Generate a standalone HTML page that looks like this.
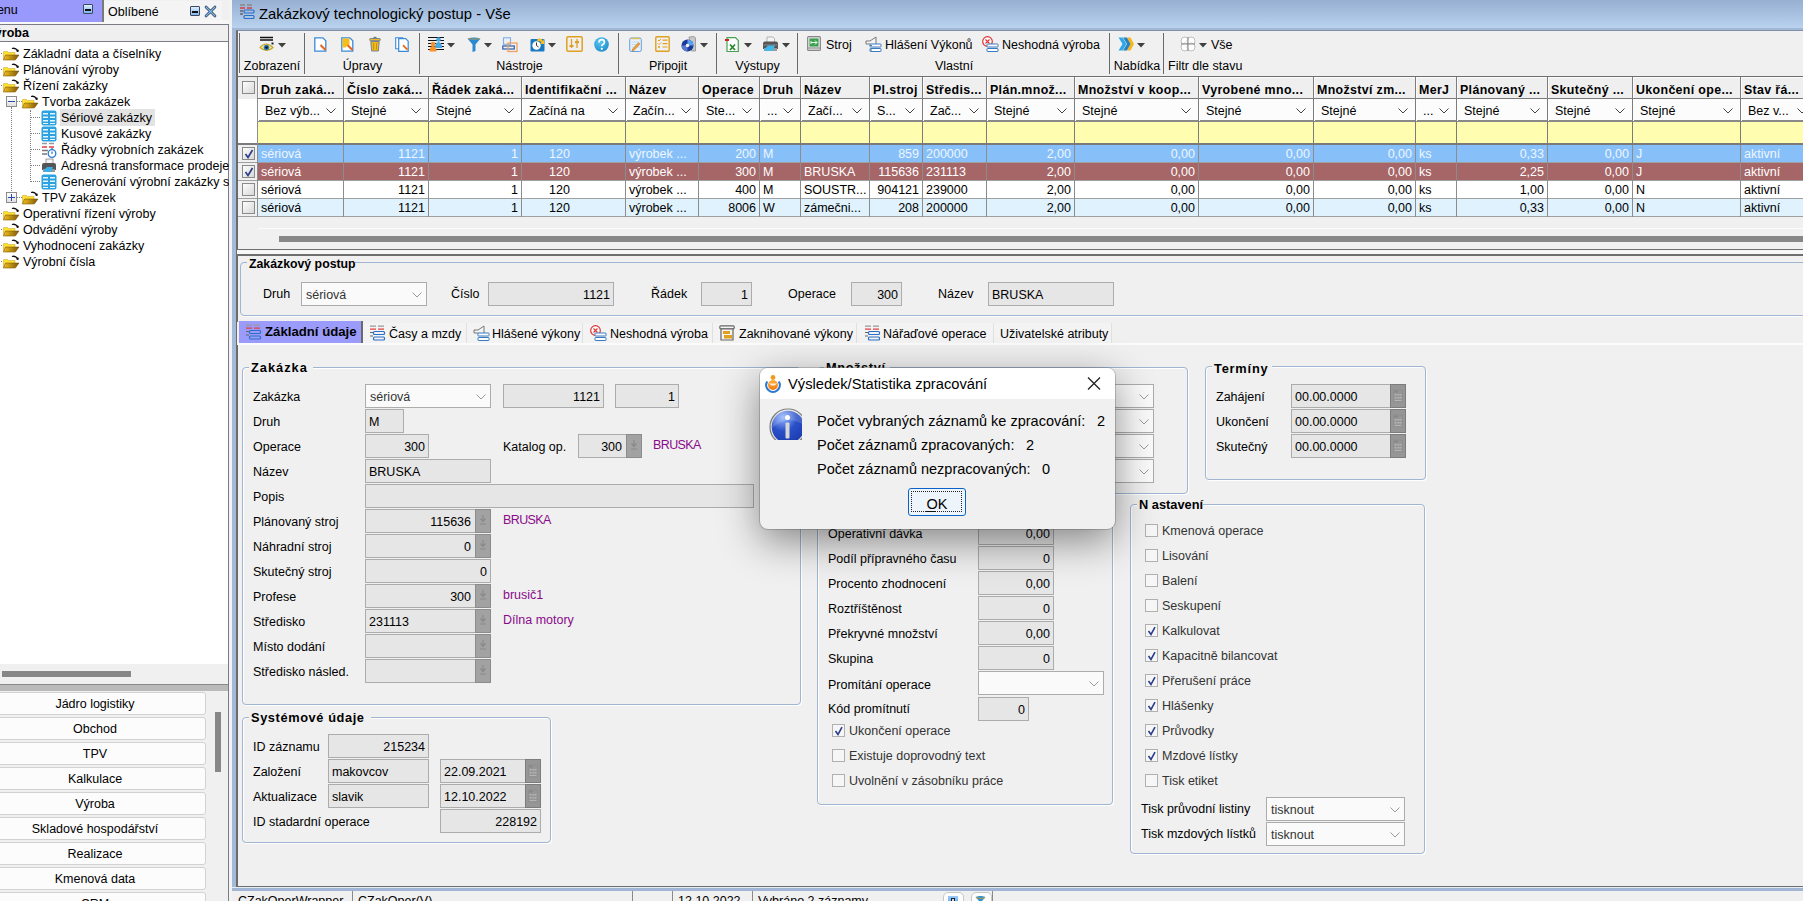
<!DOCTYPE html><html><head><meta charset="utf-8"><style>
*{margin:0;padding:0;box-sizing:border-box}
html,body{width:1803px;height:901px;overflow:hidden}
body{position:relative;background:#f0f0f0;font-family:"Liberation Sans",sans-serif;font-size:12.5px;color:#000}
.a{position:absolute}
.t{position:absolute;white-space:nowrap;line-height:normal}
svg{position:absolute;overflow:visible}
</style></head><body><div class="a" style="left:0px;top:0px;width:229px;height:901px;background:#f0f0f0"></div><div class="a" style="left:0px;top:0px;width:103px;height:22px;background:#9999fc"></div><div class="t" style="left:-13.5px;top:2.69px;font-size:12.5px;">Menu</div><div class="a" style="left:83px;top:4px;width:10px;height:10px;border:1px solid #3c4a60;border-radius:1px;background:linear-gradient(#dfefff,#7fb4ec)"><div class="a" style="left:1px;top:4px;width:6px;height:2px;background:#111"></div></div><div class="a" style="left:102px;top:0px;width:2px;height:22px;background:#7a7a7a"></div><div class="a" style="left:104px;top:1px;width:118px;height:19px;background:#f4f4f4"></div><div class="t" style="left:108px;top:4.69px;font-size:12.5px;">Oblíbené</div><div class="a" style="left:190px;top:6px;width:10px;height:10px;border:1px solid #3c4a60;border-radius:1px;background:linear-gradient(#dfefff,#7fb4ec)"><div class="a" style="left:1px;top:4px;width:6px;height:2px;background:#111"></div></div><svg class="a" style="left:205px;top:6px" width="11" height="11" viewBox="0 0 11 11"><path d="M1 1 L10 10 M10 1 L1 10" stroke="#2a3a50" stroke-width="2.6" stroke-linecap="round"/><path d="M1 1 L10 10 M10 1 L1 10" stroke="#7fbaf0" stroke-width="1.2" stroke-linecap="round"/></svg><div class="a" style="left:104px;top:20px;width:125px;height:4px;background:#f7f7f7"></div><div class="a" style="left:0px;top:22px;width:104px;height:2px;background:#f7f7f7"></div><div class="a" style="left:0px;top:24px;width:229px;height:18px;background:#efefef;border-top:1px solid #7c7c84;border-bottom:1px solid #7c7c84;border-right:1px solid #7c7c84"></div><div class="t" style="left:-13.5px;top:25.69px;font-size:12.5px;font-weight:bold;">Výroba</div><div class="a" style="left:0px;top:42px;width:228px;height:622px;background:#fff"></div><div class="a" style="left:228px;top:24px;width:1px;height:877px;background:#7c7c84"></div><div class="a" style="left:11px;top:107px;width:1px;height:90px;border-left:1px dotted #808080"></div><div class="a" style="left:30px;top:110px;width:1px;height:72px;border-left:1px dotted #808080"></div><div class="a" style="left:1px;top:53px;width:1px;height:1px;background:#808080"></div><svg class="a" style="left:3px;top:47px" width="17" height="14" viewBox="0 0 17 14">
<defs><linearGradient id="fg0" x1="0" y1="0" x2="1" y2="0"><stop offset="0" stop-color="#f0c020"/><stop offset="1" stop-color="#80560a"/></linearGradient></defs>
<path d="M0.5 4.5 h4 l1 1 h6.5 v7.5 h-11.5z" fill="#ffe030" stroke="#c8a020" stroke-width="0.5"/>
<path d="M2.5 8 h13.5 l-3.5 4.8 h-12z" fill="url(#fg0)" stroke="#6a4a08" stroke-width="0.5"/>
<path d="M9 1.5 q3.5 -1 5.5 2" fill="none" stroke="#111" stroke-width="1.3"/><circle cx="14.6" cy="3.8" r="1.2" fill="#111"/>
</svg><div class="t" style="left:23px;top:46.69px;font-size:12.5px;">Základní data a číselníky</div><div class="a" style="left:1px;top:69px;width:1px;height:1px;background:#808080"></div><svg class="a" style="left:3px;top:63px" width="17" height="14" viewBox="0 0 17 14">
<defs><linearGradient id="fg1" x1="0" y1="0" x2="1" y2="0"><stop offset="0" stop-color="#f0c020"/><stop offset="1" stop-color="#80560a"/></linearGradient></defs>
<path d="M0.5 4.5 h4 l1 1 h6.5 v7.5 h-11.5z" fill="#ffe030" stroke="#c8a020" stroke-width="0.5"/>
<path d="M2.5 8 h13.5 l-3.5 4.8 h-12z" fill="url(#fg1)" stroke="#6a4a08" stroke-width="0.5"/>
<path d="M9 1.5 q3.5 -1 5.5 2" fill="none" stroke="#111" stroke-width="1.3"/><circle cx="14.6" cy="3.8" r="1.2" fill="#111"/>
</svg><div class="t" style="left:23px;top:62.69px;font-size:12.5px;">Plánování výroby</div><div class="a" style="left:1px;top:85px;width:1px;height:1px;background:#808080"></div><svg class="a" style="left:3px;top:79px" width="17" height="14" viewBox="0 0 17 14">
<defs><linearGradient id="fg2" x1="0" y1="0" x2="1" y2="0"><stop offset="0" stop-color="#f0c020"/><stop offset="1" stop-color="#80560a"/></linearGradient></defs>
<path d="M0.5 4.5 h4 l1 1 h6.5 v7.5 h-11.5z" fill="#ffe030" stroke="#c8a020" stroke-width="0.5"/>
<path d="M2.5 8 h13.5 l-3.5 4.8 h-12z" fill="url(#fg2)" stroke="#6a4a08" stroke-width="0.5"/>
<path d="M9 1.5 q3.5 -1 5.5 2" fill="none" stroke="#111" stroke-width="1.3"/><circle cx="14.6" cy="3.8" r="1.2" fill="#111"/>
</svg><div class="t" style="left:23px;top:78.69px;font-size:12.5px;">Řízení zakázky</div><div class="a" style="left:6px;top:96px;width:11px;height:11px;background:linear-gradient(#fff,#e0e0e0);border:1px solid #8c8c8c"></div><div class="a" style="left:8px;top:101px;width:7px;height:1px;background:#2a4ab0"></div><div class="a" style="left:17px;top:101px;width:5px;height:1px;border-top:1px dotted #808080"></div><svg class="a" style="left:22px;top:95px" width="17" height="14" viewBox="0 0 17 14">
<defs><linearGradient id="fg3" x1="0" y1="0" x2="1" y2="0"><stop offset="0" stop-color="#f0c020"/><stop offset="1" stop-color="#80560a"/></linearGradient></defs>
<path d="M0.5 4.5 h4 l1 1 h6.5 v7.5 h-11.5z" fill="#ffe030" stroke="#c8a020" stroke-width="0.5"/>
<path d="M2.5 8 h13.5 l-3.5 4.8 h-12z" fill="url(#fg3)" stroke="#6a4a08" stroke-width="0.5"/>
<path d="M9 1.5 q3.5 -1 5.5 2" fill="none" stroke="#111" stroke-width="1.3"/><circle cx="14.6" cy="3.8" r="1.2" fill="#111"/>
</svg><div class="t" style="left:42px;top:94.69px;font-size:12.5px;">Tvorba zakázek</div><div class="a" style="left:31px;top:117px;width:9px;height:1px;border-top:1px dotted #808080"></div><div class="a" style="left:60px;top:109px;width:95px;height:17px;background:#e3e3e3"></div><svg class="a" style="left:41px;top:110px" width="16" height="16" viewBox="0 0 16 16">
<rect x="0.5" y="0.5" width="15" height="15" rx="2" fill="#2aa3e0"/>
<g fill="#e8f6ff"><rect x="2" y="3" width="5" height="1.5"/><rect x="9" y="3" width="5" height="1.5"/><rect x="2" y="6.5" width="5" height="1.5"/><rect x="9" y="6.5" width="5" height="1.5"/><rect x="2" y="10" width="5" height="1.5"/><rect x="9" y="10" width="5" height="1.5"/><rect x="2" y="13" width="5" height="1"/><rect x="9" y="13" width="5" height="1"/></g>
</svg><div class="t" style="left:61px;top:110.69px;font-size:12.5px;">Sériové zakázky</div><div class="a" style="left:31px;top:133px;width:9px;height:1px;border-top:1px dotted #808080"></div><svg class="a" style="left:41px;top:126px" width="16" height="16" viewBox="0 0 16 16">
<rect x="0.5" y="0.5" width="15" height="15" rx="2" fill="#2aa3e0"/>
<g fill="#e8f6ff"><rect x="2" y="3" width="5" height="1.5"/><rect x="9" y="3" width="5" height="1.5"/><rect x="2" y="6.5" width="5" height="1.5"/><rect x="9" y="6.5" width="5" height="1.5"/><rect x="2" y="10" width="5" height="1.5"/><rect x="9" y="10" width="5" height="1.5"/><rect x="2" y="13" width="5" height="1"/><rect x="9" y="13" width="5" height="1"/></g>
</svg><div class="t" style="left:61px;top:126.69px;font-size:12.5px;">Kusové zakázky</div><div class="a" style="left:31px;top:149px;width:9px;height:1px;border-top:1px dotted #808080"></div><svg class="a" style="left:41px;top:142px" width="16" height="16" viewBox="0 0 16 16"><g stroke-width="1.5"><path d="M1 1.5h5M8 1.5h5" stroke="#999"/><path d="M1 5h5M8 5h5" stroke="#e04040"/><path d="M1 8.5h6M1 12h5" stroke="#777"/></g><circle cx="11" cy="11.5" r="3.8" fill="#fff" stroke="#2a7ad0" stroke-width="1.3"/><path d="M11 9.5v2.5" stroke="#2a7ad0" stroke-width="1.2"/><path d="M10 6.8h2" stroke="#2a7ad0" stroke-width="1"/></svg><div class="t" style="left:61px;top:142.69px;font-size:12.5px;">Řádky výrobních zakázek</div><div class="a" style="left:31px;top:165px;width:9px;height:1px;border-top:1px dotted #808080"></div><svg class="a" style="left:41px;top:158px" width="16" height="16" viewBox="0 0 16 16"><rect x="5" y="1" width="7" height="5" fill="#f4f4f4" stroke="#777" stroke-width="0.7"/><path d="M1 7 q0-2 2-2 h10 q2 0 2 2 v5 h-14z" fill="#555"/><path d="M2 11 h12 v3 h-12z" fill="#999"/><path d="M3 12 l3 -3 h6 l-2 5 h-7z" fill="#3ab0e8"/></svg><div class="t" style="left:61px;top:158.69px;font-size:12.5px;">Adresná transformace prodejek</div><div class="a" style="left:31px;top:181px;width:9px;height:1px;border-top:1px dotted #808080"></div><svg class="a" style="left:41px;top:174px" width="16" height="16" viewBox="0 0 16 16">
<rect x="0.5" y="0.5" width="15" height="15" rx="2" fill="#2aa3e0"/>
<g fill="#e8f6ff"><rect x="2" y="3" width="5" height="1.5"/><rect x="9" y="3" width="5" height="1.5"/><rect x="2" y="6.5" width="5" height="1.5"/><rect x="9" y="6.5" width="5" height="1.5"/><rect x="2" y="10" width="5" height="1.5"/><rect x="9" y="10" width="5" height="1.5"/><rect x="2" y="13" width="5" height="1"/><rect x="9" y="13" width="5" height="1"/></g>
</svg><div class="t" style="left:61px;top:174.69px;font-size:12.5px;">Generování výrobní zakázky s</div><div class="a" style="left:6px;top:192px;width:11px;height:11px;background:linear-gradient(#fff,#e0e0e0);border:1px solid #8c8c8c"></div><div class="a" style="left:8px;top:197px;width:7px;height:1px;background:#2a4ab0"></div><div class="a" style="left:11px;top:194px;width:1px;height:7px;background:#2a4ab0"></div><div class="a" style="left:17px;top:197px;width:5px;height:1px;border-top:1px dotted #808080"></div><svg class="a" style="left:22px;top:191px" width="17" height="14" viewBox="0 0 17 14">
<defs><linearGradient id="fg9" x1="0" y1="0" x2="1" y2="0"><stop offset="0" stop-color="#f0c020"/><stop offset="1" stop-color="#80560a"/></linearGradient></defs>
<path d="M0.5 4.5 h4 l1 1 h6.5 v7.5 h-11.5z" fill="#ffe030" stroke="#c8a020" stroke-width="0.5"/>
<path d="M2.5 8 h13.5 l-3.5 4.8 h-12z" fill="url(#fg9)" stroke="#6a4a08" stroke-width="0.5"/>
<path d="M9 1.5 q3.5 -1 5.5 2" fill="none" stroke="#111" stroke-width="1.3"/><circle cx="14.6" cy="3.8" r="1.2" fill="#111"/>
</svg><div class="t" style="left:42px;top:190.69px;font-size:12.5px;">TPV zakázek</div><div class="a" style="left:1px;top:213px;width:1px;height:1px;background:#808080"></div><svg class="a" style="left:3px;top:207px" width="17" height="14" viewBox="0 0 17 14">
<defs><linearGradient id="fg10" x1="0" y1="0" x2="1" y2="0"><stop offset="0" stop-color="#f0c020"/><stop offset="1" stop-color="#80560a"/></linearGradient></defs>
<path d="M0.5 4.5 h4 l1 1 h6.5 v7.5 h-11.5z" fill="#ffe030" stroke="#c8a020" stroke-width="0.5"/>
<path d="M2.5 8 h13.5 l-3.5 4.8 h-12z" fill="url(#fg10)" stroke="#6a4a08" stroke-width="0.5"/>
<path d="M9 1.5 q3.5 -1 5.5 2" fill="none" stroke="#111" stroke-width="1.3"/><circle cx="14.6" cy="3.8" r="1.2" fill="#111"/>
</svg><div class="t" style="left:23px;top:206.69px;font-size:12.5px;">Operativní řízení výroby</div><div class="a" style="left:1px;top:229px;width:1px;height:1px;background:#808080"></div><svg class="a" style="left:3px;top:223px" width="17" height="14" viewBox="0 0 17 14">
<defs><linearGradient id="fg11" x1="0" y1="0" x2="1" y2="0"><stop offset="0" stop-color="#f0c020"/><stop offset="1" stop-color="#80560a"/></linearGradient></defs>
<path d="M0.5 4.5 h4 l1 1 h6.5 v7.5 h-11.5z" fill="#ffe030" stroke="#c8a020" stroke-width="0.5"/>
<path d="M2.5 8 h13.5 l-3.5 4.8 h-12z" fill="url(#fg11)" stroke="#6a4a08" stroke-width="0.5"/>
<path d="M9 1.5 q3.5 -1 5.5 2" fill="none" stroke="#111" stroke-width="1.3"/><circle cx="14.6" cy="3.8" r="1.2" fill="#111"/>
</svg><div class="t" style="left:23px;top:222.69px;font-size:12.5px;">Odvádění výroby</div><div class="a" style="left:1px;top:245px;width:1px;height:1px;background:#808080"></div><svg class="a" style="left:3px;top:239px" width="17" height="14" viewBox="0 0 17 14">
<defs><linearGradient id="fg12" x1="0" y1="0" x2="1" y2="0"><stop offset="0" stop-color="#f0c020"/><stop offset="1" stop-color="#80560a"/></linearGradient></defs>
<path d="M0.5 4.5 h4 l1 1 h6.5 v7.5 h-11.5z" fill="#ffe030" stroke="#c8a020" stroke-width="0.5"/>
<path d="M2.5 8 h13.5 l-3.5 4.8 h-12z" fill="url(#fg12)" stroke="#6a4a08" stroke-width="0.5"/>
<path d="M9 1.5 q3.5 -1 5.5 2" fill="none" stroke="#111" stroke-width="1.3"/><circle cx="14.6" cy="3.8" r="1.2" fill="#111"/>
</svg><div class="t" style="left:23px;top:238.69px;font-size:12.5px;">Vyhodnocení zakázky</div><div class="a" style="left:1px;top:261px;width:1px;height:1px;background:#808080"></div><svg class="a" style="left:3px;top:255px" width="17" height="14" viewBox="0 0 17 14">
<defs><linearGradient id="fg13" x1="0" y1="0" x2="1" y2="0"><stop offset="0" stop-color="#f0c020"/><stop offset="1" stop-color="#80560a"/></linearGradient></defs>
<path d="M0.5 4.5 h4 l1 1 h6.5 v7.5 h-11.5z" fill="#ffe030" stroke="#c8a020" stroke-width="0.5"/>
<path d="M2.5 8 h13.5 l-3.5 4.8 h-12z" fill="url(#fg13)" stroke="#6a4a08" stroke-width="0.5"/>
<path d="M9 1.5 q3.5 -1 5.5 2" fill="none" stroke="#111" stroke-width="1.3"/><circle cx="14.6" cy="3.8" r="1.2" fill="#111"/>
</svg><div class="t" style="left:23px;top:254.69px;font-size:12.5px;">Výrobní čísla</div><div class="a" style="left:0px;top:664px;width:228px;height:20px;background:#f0f0f0"></div><div class="a" style="left:2px;top:671px;width:129px;height:6px;background:#878787"></div><div class="a" style="left:0px;top:684px;width:228px;height:7px;background:#bababa;border-top:1px solid #8a8a8a"></div><div class="a" style="left:0px;top:691px;width:228px;height:210px;background:#f0f0f0"></div><div class="a" style="left:-4px;top:692px;width:210px;height:23px;background:#fcfcfc;border:1px solid #d2d2d2;border-radius:3px"></div><div class="t" style="left:0px;top:696.69px;font-size:12.5px;width:190px;text-align:center;">Jádro logistiky</div><div class="a" style="left:-4px;top:717px;width:210px;height:23px;background:#fcfcfc;border:1px solid #d2d2d2;border-radius:3px"></div><div class="t" style="left:0px;top:721.69px;font-size:12.5px;width:190px;text-align:center;">Obchod</div><div class="a" style="left:-4px;top:742px;width:210px;height:23px;background:#fcfcfc;border:1px solid #d2d2d2;border-radius:3px"></div><div class="t" style="left:0px;top:746.69px;font-size:12.5px;width:190px;text-align:center;">TPV</div><div class="a" style="left:-4px;top:767px;width:210px;height:23px;background:#fcfcfc;border:1px solid #d2d2d2;border-radius:3px"></div><div class="t" style="left:0px;top:771.69px;font-size:12.5px;width:190px;text-align:center;">Kalkulace</div><div class="a" style="left:-4px;top:792px;width:210px;height:23px;background:#fcfcfc;border:1px solid #d2d2d2;border-radius:3px"></div><div class="t" style="left:0px;top:796.69px;font-size:12.5px;width:190px;text-align:center;">Výroba</div><div class="a" style="left:-4px;top:817px;width:210px;height:23px;background:#fcfcfc;border:1px solid #d2d2d2;border-radius:3px"></div><div class="t" style="left:0px;top:821.69px;font-size:12.5px;width:190px;text-align:center;">Skladové hospodářství</div><div class="a" style="left:-4px;top:842px;width:210px;height:23px;background:#fcfcfc;border:1px solid #d2d2d2;border-radius:3px"></div><div class="t" style="left:0px;top:846.69px;font-size:12.5px;width:190px;text-align:center;">Realizace</div><div class="a" style="left:-4px;top:867px;width:210px;height:23px;background:#fcfcfc;border:1px solid #d2d2d2;border-radius:3px"></div><div class="t" style="left:0px;top:871.69px;font-size:12.5px;width:190px;text-align:center;">Kmenová data</div><div class="a" style="left:-4px;top:892px;width:210px;height:23px;background:#fcfcfc;border:1px solid #d2d2d2;border-radius:3px"></div><div class="t" style="left:0px;top:896.69px;font-size:12.5px;width:190px;text-align:center;">CRM</div><div class="a" style="left:215px;top:712px;width:6px;height:60px;background:#878787"></div><div class="a" style="left:229px;top:0px;width:3px;height:901px;background:#f3f3f3"></div><div class="a" style="left:232px;top:0px;width:1571px;height:901px;background:#a3bad8"></div><div class="a" style="left:232px;top:0px;width:1571px;height:28px;background:linear-gradient(#97afd2,#b9d2ee)"></div><div class="a" style="left:232px;top:28px;width:1571px;height:2px;background:#a2b8d6"></div><svg class="a" style="left:239px;top:4px" width="16" height="16" viewBox="0 0 16 16"><g stroke-width="1.3"><path d="M1 1h5M8 1h5" stroke="#888"/><path d="M1 4h5M8 4h5" stroke="#d84040"/><path d="M1 7h3M1 10h3" stroke="#666"/></g><g fill="none" stroke="#2a70c8" stroke-width="1.2"><rect x="5" y="6" width="10" height="3" rx="1"/><rect x="5" y="11.5" width="10" height="3" rx="1"/></g></svg><div class="t" style="left:259px;top:6.11px;font-size:14.8px;">Zakázkový technologický postup - Vše</div><div class="a" style="left:236px;top:30px;width:1567px;height:858px;background:#f0f0f0;border-left:2px solid #6b6b6b;border-top:1px solid #8092aa"></div><div class="a" style="left:239px;top:33px;width:1px;height:40px;background:#6b6b6b"></div><div class="a" style="left:304px;top:33px;width:1px;height:41px;background:#6a6a6a"></div><div class="a" style="left:419px;top:33px;width:1px;height:41px;background:#6a6a6a"></div><div class="a" style="left:618px;top:33px;width:1px;height:41px;background:#6a6a6a"></div><div class="a" style="left:716px;top:33px;width:1px;height:41px;background:#6a6a6a"></div><div class="a" style="left:797px;top:33px;width:1px;height:41px;background:#6a6a6a"></div><div class="a" style="left:1109px;top:33px;width:1px;height:41px;background:#6a6a6a"></div><div class="a" style="left:1163px;top:33px;width:1px;height:41px;background:#6a6a6a"></div><div class="t" style="left:240px;top:58.69px;font-size:12.5px;width:64px;text-align:center;">Zobrazení</div><div class="t" style="left:306px;top:58.69px;font-size:12.5px;width:113px;text-align:center;">Úpravy</div><div class="t" style="left:421px;top:58.69px;font-size:12.5px;width:197px;text-align:center;">Nástroje</div><div class="t" style="left:620px;top:58.69px;font-size:12.5px;width:96px;text-align:center;">Připojit</div><div class="t" style="left:718px;top:58.69px;font-size:12.5px;width:79px;text-align:center;">Výstupy</div><div class="t" style="left:799px;top:58.69px;font-size:12.5px;width:310px;text-align:center;">Vlastní</div><div class="t" style="left:1111px;top:58.69px;font-size:12.5px;width:52px;text-align:center;">Nabídka</div><div class="t" style="left:1168px;top:58.69px;font-size:12.5px;">Filtr dle stavu</div><svg class="a" style="left:259px;top:36px" width="16" height="17" viewBox="0 0 16 17"><path d="M1 1.5h13M1 4h13" stroke="#111" stroke-width="1.3"/><path d="M12.5 7.5h2" stroke="#222" stroke-width="2"/><path d="M1 11.5 q6 -7 13 0 q-6 6 -13 0z" fill="#f3e7a0" stroke="#c9a020" stroke-width="1.1"/><circle cx="7.5" cy="11.5" r="2.8" fill="#2a7fb0"/><circle cx="7.5" cy="11.5" r="1.3" fill="#111"/></svg><svg class="a" style="left:278px;top:43px" width="8" height="5" viewBox="0 0 8 5"><path d="M0 0h8l-4 4.5z" fill="#404040"/></svg><svg class="a" style="left:314px;top:37px" width="13" height="15" viewBox="0 0 13 15"><path d="M0.8 0.8h8l3 3v10.4h-11z" fill="#fff" stroke="#3a8ad8" stroke-width="1.3"/><path d="M6 9 l4.5 4.5 l1.5 -0.5 l-0.5 -1.5 l-4.5 -4.5z" fill="#e8661a"/></svg><svg class="a" style="left:341px;top:37px" width="13" height="15" viewBox="0 0 13 15"><path d="M0.8 0.8h8l3 3v10.4h-11z" fill="#fff" stroke="#3a8ad8" stroke-width="1.3"/><path d="M1.5 1.5h7v5l-4 4h-3z" fill="#f5bf1a"/><path d="M6 9 l4.5 4.5 l1.5 -0.5 l-0.5 -1.5 l-4.5 -4.5z" fill="#e8661a"/></svg><svg class="a" style="left:369px;top:36px" width="12" height="16" viewBox="0 0 12 16"><path d="M4.5 1.5h3" stroke="#6a7a90" stroke-width="1.4"/><rect x="0.7" y="2.5" width="10.6" height="2.2" rx="0.8" fill="#f0b820" stroke="#6a7a90" stroke-width="0.9"/><path d="M1.8 5.5h8.4l-0.8 9.5h-6.8z" fill="#f0b820" stroke="#6a7a90" stroke-width="0.9"/><path d="M4.5 7v6.5M7.5 7v6.5" stroke="#b88a10" stroke-width="0.8"/></svg><svg class="a" style="left:395px;top:37px" width="14" height="15" viewBox="0 0 14 15"><path d="M0.7 0.7h7v11h-7z" fill="#fff" stroke="#3a8ad8" stroke-width="1.1"/><path d="M3.7 1.7h7l2.5 2.5v10.1h-9.5z" fill="#fff" stroke="#3a8ad8" stroke-width="1.2"/><path d="M7.5 9 l4 4 l1.3 -0.3 l-0.3 -1.3 l-4 -4z" fill="#e8661a"/></svg><svg class="a" style="left:428px;top:36px" width="16" height="16" viewBox="0 0 16 16"><g stroke="#111" stroke-width="1.2"><path d="M0 1.5h16M0 4.5h16M0 7.5h16M0 10.5h16M0 13.5h16"/></g><circle cx="10.5" cy="3.5" r="2.3" fill="#4aa8e0"/><path d="M7 12 q0-6 3.5-6 q3.5 0 3.5 6z" fill="#4aa8e0"/><circle cx="5" cy="8" r="2.3" fill="#f5922a"/><path d="M1.5 15.5 q0-5.5 3.5-5.5 q3.5 0 3.5 5.5z" fill="#f5922a"/></svg><svg class="a" style="left:447px;top:43px" width="8" height="5" viewBox="0 0 8 5"><path d="M0 0h8l-4 4.5z" fill="#404040"/></svg><svg class="a" style="left:467px;top:37px" width="14" height="15" viewBox="0 0 14 15"><path d="M0.5 1.5 q6.5 -2 13 0 l-5 6 v6.5 l-3 1 v-7.5z" fill="#2a8ad0"/><path d="M1 1.5 q6 1.5 12 0" fill="none" stroke="#d0a040" stroke-width="0.8"/></svg><svg class="a" style="left:484px;top:43px" width="8" height="5" viewBox="0 0 8 5"><path d="M0 0h8l-4 4.5z" fill="#404040"/></svg><svg class="a" style="left:502px;top:37px" width="16" height="15" viewBox="0 0 16 15"><rect x="1.5" y="0.8" width="7" height="6.5" fill="none" stroke="#7ab0e8" stroke-width="1.1"/><rect x="0.8" y="9" width="11.5" height="3" fill="none" stroke="#2a60b0" stroke-width="1.2"/><rect x="6" y="6" width="9" height="8.5" fill="none" stroke="#f0a060" stroke-width="1.3"/></svg><svg class="a" style="left:530px;top:36px" width="15" height="16" viewBox="0 0 15 16"><rect x="0.5" y="3" width="14" height="12.5" rx="1" fill="#1a7ac0"/><circle cx="6.5" cy="9.5" r="4.2" fill="#fff"/><path d="M6.5 6.5v3l2 1.5" stroke="#333" stroke-width="1" fill="none"/><path d="M7 4 q3 -4 6 1 l1 -2 v5 h-4 l1.5 -1.5 q-2 -2.5 -4 -1z" fill="#f8c020"/></svg><svg class="a" style="left:548px;top:43px" width="8" height="5" viewBox="0 0 8 5"><path d="M0 0h8l-4 4.5z" fill="#404040"/></svg><svg class="a" style="left:566px;top:36px" width="17" height="16" viewBox="0 0 17 16"><rect x="0.8" y="0.8" width="15.4" height="14.4" rx="1.5" fill="none" stroke="#e0a020" stroke-width="1.5"/><path d="M5.5 3v9M11 3v9" stroke="#e0a020" stroke-width="1.3"/><rect x="3.5" y="9" width="4" height="2" fill="#e0a020"/><rect x="9" y="5" width="4" height="2.2" fill="#e0a020"/></svg><svg class="a" style="left:594px;top:37px" width="15" height="15" viewBox="0 0 15 15"><defs><radialGradient id="hq" cx="0.4" cy="0.3" r="0.8"><stop offset="0" stop-color="#5ac8f5"/><stop offset="1" stop-color="#1a88c8"/></radialGradient></defs><circle cx="7.5" cy="7.5" r="7.3" fill="url(#hq)"/><path d="M5 5.5 q0-2.8 2.7-2.8 q2.7 0 2.7 2.5 q0 1.5-1.6 2.3 q-1 0.5-1 1.8" fill="none" stroke="#fff" stroke-width="1.7"/><circle cx="7.8" cy="11.8" r="1.1" fill="#fff"/></svg><svg class="a" style="left:629px;top:37px" width="13" height="15" viewBox="0 0 13 15"><rect x="0.7" y="1" width="11.6" height="13.5" rx="1.5" fill="#e8f2ff" stroke="#6aa0d8" stroke-width="1"/><path d="M2 1.5h9" stroke="#d8c060" stroke-width="1.5"/><path d="M2.5 5h8M2.5 7.5h8M2.5 10h8" stroke="#a8c8e8" stroke-width="0.6"/><path d="M3.5 12 l6 -6.5 l1.5 1.5 l-6 6.5 l-2 0.5z" fill="#f0a030" stroke="#b06010" stroke-width="0.4"/></svg><svg class="a" style="left:655px;top:36px" width="15" height="16" viewBox="0 0 15 16"><rect x="0.8" y="0.8" width="13.4" height="14.4" rx="1" fill="none" stroke="#e0a020" stroke-width="1.4"/><path d="M3 4 l1 1 l2 -2M3 7.5 l1 1 l2 -2" fill="none" stroke="#e0a020" stroke-width="1"/><circle cx="4" cy="11" r="1.1" fill="#e0a020"/><path d="M7.5 4.2h5M7.5 7.7h5M7.5 11h5" stroke="#e0a020" stroke-width="1.2"/></svg><svg class="a" style="left:681px;top:36px" width="16" height="16" viewBox="0 0 16 16"><path d="M8 1 l4 -0.5 q2 0 2.5 1.5 v13 h-4 z" fill="#c8c8c8" stroke="#777" stroke-width="0.6"/><circle cx="6.5" cy="9.5" r="6" fill="#1a3a9a"/><path d="M6.5 3.5 a6 6 0 0 1 6 6 h-6z" fill="#5aa0f0"/><path d="M0.5 9.5 a6 6 0 0 0 6 6 v-6z" fill="#5a7ad0"/><circle cx="6.5" cy="9.5" r="1.8" fill="#f4f4e8"/></svg><svg class="a" style="left:700px;top:43px" width="8" height="5" viewBox="0 0 8 5"><path d="M0 0h8l-4 4.5z" fill="#404040"/></svg><svg class="a" style="left:725px;top:37px" width="14" height="15" viewBox="0 0 14 15"><path d="M2 0.7h8.5l2.8 2.8v11h-11.3z" fill="#fff" stroke="#4aa050" stroke-width="1.2"/><rect x="0" y="2" width="4" height="2" fill="#d02020"/><path d="M5 7.5 l5 5.5 M10 7.5 l-5 5.5" stroke="#2a8a30" stroke-width="1.8"/></svg><svg class="a" style="left:744px;top:43px" width="8" height="5" viewBox="0 0 8 5"><path d="M0 0h8l-4 4.5z" fill="#404040"/></svg><svg class="a" style="left:762px;top:36px" width="17" height="16" viewBox="0 0 17 16"><path d="M5 1 h6 l1.5 1.5 v4 h-7.5z" fill="#f4f4f4" stroke="#999" stroke-width="0.7"/><path d="M1 7.5 q0-2 2-2 h11 q2 0 2 2 v5.5 h-15z" fill="#555"/><path d="M1.5 9 h14" stroke="#888" stroke-width="1"/><path d="M2 12 h13 v3 h-13z" fill="#9a9a9a"/><path d="M3 12.5 l3 -3 h7 l-2.5 5.5 h-8z" fill="#40b8ec"/></svg><svg class="a" style="left:782px;top:43px" width="8" height="5" viewBox="0 0 8 5"><path d="M0 0h8l-4 4.5z" fill="#404040"/></svg><svg class="a" style="left:807px;top:36px" width="14" height="15" viewBox="0 0 14 15"><rect x="0.6" y="0.6" width="12.8" height="13.8" rx="1" fill="#e0e0e0" stroke="#888" stroke-width="1.1"/><rect x="2.5" y="2.5" width="9" height="8" fill="#3aa050"/><path d="M4 6.5h6M4 5v3M8 4.5l2 2l-2 2" stroke="#e8ffe8" stroke-width="1" fill="none"/><path d="M1 12h12" stroke="#888" stroke-width="1"/></svg><div class="t" style="left:826px;top:37.69px;font-size:12.5px;">Stroj</div><svg class="a" style="left:865px;top:36px" width="17" height="16" viewBox="0 0 17 16"><path d="M1 5 h4 l6 -4 v10 l-6 -3 h-4z" fill="#f4f4f4" stroke="#777" stroke-width="1"/><g fill="#fff" stroke="#3a7ac0" stroke-width="1"><rect x="5" y="8" width="11" height="3" rx="0.5"/><rect x="5" y="12.5" width="11" height="3" rx="0.5"/></g><path d="M5 9.5h2M5 14h2" stroke="#3a7ac0"/></svg><div class="t" style="left:885px;top:37.69px;font-size:12.5px;">Hlášení Výkonů</div><svg class="a" style="left:982px;top:36px" width="17" height="16" viewBox="0 0 17 16"><circle cx="5.5" cy="5.5" r="4.8" fill="#fff" stroke="#e03030" stroke-width="1.2"/><path d="M3.5 3.5l4 4M7.5 3.5l-4 4" stroke="#e03030" stroke-width="1.1"/><g fill="#fff" stroke="#3a7ac0" stroke-width="1"><rect x="5" y="8" width="11" height="3" rx="0.5"/><rect x="5" y="12.5" width="11" height="3" rx="0.5"/></g></svg><div class="t" style="left:1002px;top:37.69px;font-size:12.5px;">Neshodná výroba</div><svg class="a" style="left:1118px;top:37px" width="16" height="14" viewBox="0 0 16 14"><path d="M0.5 0.5 h4 l4 6.5 l-4 6.5 h-4 l4 -6.5z" fill="#30a8e8"/><path d="M5 0.5 h4 l4 6.5 l-4 6.5 h-4 l4 -6.5z" fill="#2a80c8"/><path d="M9 0.5 h3.5 l3.5 6.5 l-3.5 6.5 h-3.5 l3.5 -6.5z" fill="#f5b81a"/></svg><svg class="a" style="left:1137px;top:43px" width="8" height="5" viewBox="0 0 8 5"><path d="M0 0h8l-4 4.5z" fill="#404040"/></svg><svg class="a" style="left:1180px;top:36px" width="16" height="16" viewBox="0 0 16 16"><g fill="#fff" stroke="#b8b8b8" stroke-width="0.9"><circle cx="5" cy="5" r="4"/><circle cx="11" cy="5" r="4"/><circle cx="5" cy="11" r="4"/><circle cx="11" cy="11" r="4"/></g><path d="M8 1v14M1 8h14" stroke="#888" stroke-width="1"/></svg><svg class="a" style="left:1199px;top:43px" width="8" height="5" viewBox="0 0 8 5"><path d="M0 0h8l-4 4.5z" fill="#404040"/></svg><div class="t" style="left:1211px;top:37.69px;font-size:12.5px;">Vše</div><div class="a" style="left:237px;top:76px;width:1566px;height:1px;background:#6e6e6e"></div><div class="a" style="left:238px;top:77px;width:1565px;height:22px;background:#efefef"></div><div class="a" style="left:238px;top:97.5px;width:1565px;height:1.5px;background:#7a7a7a"></div><div class="a" style="left:238px;top:77px;width:20px;height:22px;background:#ededed"></div><div class="a" style="left:242px;top:81px;width:13px;height:13px;background:linear-gradient(135deg,#fdfdfd,#d8d8d8);border:1px solid #8a8a8a"></div><div class="a" style="left:238px;top:99px;width:20px;height:45px;background:#fff"></div><div class="a" style="left:258px;top:99px;width:1545px;height:22px;background:#fcfcfc"></div><div class="a" style="left:258px;top:120px;width:1545px;height:2px;background:#8a8a8a"></div><div class="a" style="left:258px;top:122px;width:1545px;height:21px;background:#fffdb0"></div><div class="a" style="left:238px;top:143px;width:1565px;height:2px;background:#7a7a7a"></div><div class="a" style="left:258px;top:77px;width:1px;height:21px;background:#fbfbfb"></div><div class="a" style="left:258px;top:99px;width:1px;height:22px;background:#ffffff"></div><div class="a" style="left:258px;top:77px;width:85px;height:1px;background:#fbfbfb"></div><div class="a" style="left:343px;top:77px;width:1px;height:67px;background:#7c7c7c"></div><div class="t" style="left:261px;top:82.78px;font-size:12.4px;font-weight:bold;letter-spacing:0.35px;">Druh zaká...</div><div class="t" style="left:265px;top:103.89px;font-size:12.5px;">Bez výb...</div><svg class="a" style="left:326px;top:108px" width="10" height="6" viewBox="0 0 10 6"><path d="M0.5 0.5 L5 5 L9.5 0.5" fill="none" stroke="#444" stroke-width="1"/></svg><div class="a" style="left:344px;top:77px;width:1px;height:21px;background:#fbfbfb"></div><div class="a" style="left:344px;top:99px;width:1px;height:22px;background:#ffffff"></div><div class="a" style="left:344px;top:77px;width:84px;height:1px;background:#fbfbfb"></div><div class="a" style="left:428px;top:77px;width:1px;height:67px;background:#7c7c7c"></div><div class="t" style="left:347px;top:82.78px;font-size:12.4px;font-weight:bold;letter-spacing:0.35px;">Číslo zaká...</div><div class="t" style="left:351px;top:103.89px;font-size:12.5px;">Stejné</div><svg class="a" style="left:411px;top:108px" width="10" height="6" viewBox="0 0 10 6"><path d="M0.5 0.5 L5 5 L9.5 0.5" fill="none" stroke="#444" stroke-width="1"/></svg><div class="a" style="left:429px;top:77px;width:1px;height:21px;background:#fbfbfb"></div><div class="a" style="left:429px;top:99px;width:1px;height:22px;background:#ffffff"></div><div class="a" style="left:429px;top:77px;width:92px;height:1px;background:#fbfbfb"></div><div class="a" style="left:521px;top:77px;width:1px;height:67px;background:#7c7c7c"></div><div class="t" style="left:432px;top:82.78px;font-size:12.4px;font-weight:bold;letter-spacing:0.35px;">Řádek zaká...</div><div class="t" style="left:436px;top:103.89px;font-size:12.5px;">Stejné</div><svg class="a" style="left:504px;top:108px" width="10" height="6" viewBox="0 0 10 6"><path d="M0.5 0.5 L5 5 L9.5 0.5" fill="none" stroke="#444" stroke-width="1"/></svg><div class="a" style="left:522px;top:77px;width:1px;height:21px;background:#fbfbfb"></div><div class="a" style="left:522px;top:99px;width:1px;height:22px;background:#ffffff"></div><div class="a" style="left:522px;top:77px;width:103px;height:1px;background:#fbfbfb"></div><div class="a" style="left:625px;top:77px;width:1px;height:67px;background:#7c7c7c"></div><div class="t" style="left:525px;top:82.78px;font-size:12.4px;font-weight:bold;letter-spacing:0.35px;">Identifikační ...</div><div class="t" style="left:529px;top:103.89px;font-size:12.5px;">Začíná na</div><svg class="a" style="left:608px;top:108px" width="10" height="6" viewBox="0 0 10 6"><path d="M0.5 0.5 L5 5 L9.5 0.5" fill="none" stroke="#444" stroke-width="1"/></svg><div class="a" style="left:626px;top:77px;width:1px;height:21px;background:#fbfbfb"></div><div class="a" style="left:626px;top:99px;width:1px;height:22px;background:#ffffff"></div><div class="a" style="left:626px;top:77px;width:72px;height:1px;background:#fbfbfb"></div><div class="a" style="left:698px;top:77px;width:1px;height:67px;background:#7c7c7c"></div><div class="t" style="left:629px;top:82.78px;font-size:12.4px;font-weight:bold;letter-spacing:0.35px;">Název</div><div class="t" style="left:633px;top:103.89px;font-size:12.5px;">Začín...</div><svg class="a" style="left:681px;top:108px" width="10" height="6" viewBox="0 0 10 6"><path d="M0.5 0.5 L5 5 L9.5 0.5" fill="none" stroke="#444" stroke-width="1"/></svg><div class="a" style="left:699px;top:77px;width:1px;height:21px;background:#fbfbfb"></div><div class="a" style="left:699px;top:99px;width:1px;height:22px;background:#ffffff"></div><div class="a" style="left:699px;top:77px;width:60px;height:1px;background:#fbfbfb"></div><div class="a" style="left:759px;top:77px;width:1px;height:67px;background:#7c7c7c"></div><div class="t" style="left:702px;top:82.78px;font-size:12.4px;font-weight:bold;letter-spacing:0.35px;">Operace</div><div class="t" style="left:706px;top:103.89px;font-size:12.5px;">Ste...</div><svg class="a" style="left:742px;top:108px" width="10" height="6" viewBox="0 0 10 6"><path d="M0.5 0.5 L5 5 L9.5 0.5" fill="none" stroke="#444" stroke-width="1"/></svg><div class="a" style="left:760px;top:77px;width:1px;height:21px;background:#fbfbfb"></div><div class="a" style="left:760px;top:99px;width:1px;height:22px;background:#ffffff"></div><div class="a" style="left:760px;top:77px;width:40px;height:1px;background:#fbfbfb"></div><div class="a" style="left:800px;top:77px;width:1px;height:67px;background:#7c7c7c"></div><div class="t" style="left:763px;top:82.78px;font-size:12.4px;font-weight:bold;letter-spacing:0.35px;">Druh</div><div class="t" style="left:767px;top:103.89px;font-size:12.5px;">...</div><svg class="a" style="left:783px;top:108px" width="10" height="6" viewBox="0 0 10 6"><path d="M0.5 0.5 L5 5 L9.5 0.5" fill="none" stroke="#444" stroke-width="1"/></svg><div class="a" style="left:801px;top:77px;width:1px;height:21px;background:#fbfbfb"></div><div class="a" style="left:801px;top:99px;width:1px;height:22px;background:#ffffff"></div><div class="a" style="left:801px;top:77px;width:68px;height:1px;background:#fbfbfb"></div><div class="a" style="left:869px;top:77px;width:1px;height:67px;background:#7c7c7c"></div><div class="t" style="left:804px;top:82.78px;font-size:12.4px;font-weight:bold;letter-spacing:0.35px;">Název</div><div class="t" style="left:808px;top:103.89px;font-size:12.5px;">Začí...</div><svg class="a" style="left:852px;top:108px" width="10" height="6" viewBox="0 0 10 6"><path d="M0.5 0.5 L5 5 L9.5 0.5" fill="none" stroke="#444" stroke-width="1"/></svg><div class="a" style="left:870px;top:77px;width:1px;height:21px;background:#fbfbfb"></div><div class="a" style="left:870px;top:99px;width:1px;height:22px;background:#ffffff"></div><div class="a" style="left:870px;top:77px;width:52px;height:1px;background:#fbfbfb"></div><div class="a" style="left:922px;top:77px;width:1px;height:67px;background:#7c7c7c"></div><div class="t" style="left:873px;top:82.78px;font-size:12.4px;font-weight:bold;letter-spacing:0.35px;">Pl.stroj</div><div class="t" style="left:877px;top:103.89px;font-size:12.5px;">S...</div><svg class="a" style="left:905px;top:108px" width="10" height="6" viewBox="0 0 10 6"><path d="M0.5 0.5 L5 5 L9.5 0.5" fill="none" stroke="#444" stroke-width="1"/></svg><div class="a" style="left:923px;top:77px;width:1px;height:21px;background:#fbfbfb"></div><div class="a" style="left:923px;top:99px;width:1px;height:22px;background:#ffffff"></div><div class="a" style="left:923px;top:77px;width:63px;height:1px;background:#fbfbfb"></div><div class="a" style="left:986px;top:77px;width:1px;height:67px;background:#7c7c7c"></div><div class="t" style="left:926px;top:82.78px;font-size:12.4px;font-weight:bold;letter-spacing:0.35px;">Středis...</div><div class="t" style="left:930px;top:103.89px;font-size:12.5px;">Zač...</div><svg class="a" style="left:969px;top:108px" width="10" height="6" viewBox="0 0 10 6"><path d="M0.5 0.5 L5 5 L9.5 0.5" fill="none" stroke="#444" stroke-width="1"/></svg><div class="a" style="left:987px;top:77px;width:1px;height:21px;background:#fbfbfb"></div><div class="a" style="left:987px;top:99px;width:1px;height:22px;background:#ffffff"></div><div class="a" style="left:987px;top:77px;width:87px;height:1px;background:#fbfbfb"></div><div class="a" style="left:1074px;top:77px;width:1px;height:67px;background:#7c7c7c"></div><div class="t" style="left:990px;top:82.78px;font-size:12.4px;font-weight:bold;letter-spacing:0.35px;">Plán.množ...</div><div class="t" style="left:994px;top:103.89px;font-size:12.5px;">Stejné</div><svg class="a" style="left:1057px;top:108px" width="10" height="6" viewBox="0 0 10 6"><path d="M0.5 0.5 L5 5 L9.5 0.5" fill="none" stroke="#444" stroke-width="1"/></svg><div class="a" style="left:1075px;top:77px;width:1px;height:21px;background:#fbfbfb"></div><div class="a" style="left:1075px;top:99px;width:1px;height:22px;background:#ffffff"></div><div class="a" style="left:1075px;top:77px;width:123px;height:1px;background:#fbfbfb"></div><div class="a" style="left:1198px;top:77px;width:1px;height:67px;background:#7c7c7c"></div><div class="t" style="left:1078px;top:82.78px;font-size:12.4px;font-weight:bold;letter-spacing:0.35px;">Množství v koop...</div><div class="t" style="left:1082px;top:103.89px;font-size:12.5px;">Stejné</div><svg class="a" style="left:1181px;top:108px" width="10" height="6" viewBox="0 0 10 6"><path d="M0.5 0.5 L5 5 L9.5 0.5" fill="none" stroke="#444" stroke-width="1"/></svg><div class="a" style="left:1199px;top:77px;width:1px;height:21px;background:#fbfbfb"></div><div class="a" style="left:1199px;top:99px;width:1px;height:22px;background:#ffffff"></div><div class="a" style="left:1199px;top:77px;width:114px;height:1px;background:#fbfbfb"></div><div class="a" style="left:1313px;top:77px;width:1px;height:67px;background:#7c7c7c"></div><div class="t" style="left:1202px;top:82.78px;font-size:12.4px;font-weight:bold;letter-spacing:0.35px;">Vyrobené mno...</div><div class="t" style="left:1206px;top:103.89px;font-size:12.5px;">Stejné</div><svg class="a" style="left:1296px;top:108px" width="10" height="6" viewBox="0 0 10 6"><path d="M0.5 0.5 L5 5 L9.5 0.5" fill="none" stroke="#444" stroke-width="1"/></svg><div class="a" style="left:1314px;top:77px;width:1px;height:21px;background:#fbfbfb"></div><div class="a" style="left:1314px;top:99px;width:1px;height:22px;background:#ffffff"></div><div class="a" style="left:1314px;top:77px;width:101px;height:1px;background:#fbfbfb"></div><div class="a" style="left:1415px;top:77px;width:1px;height:67px;background:#7c7c7c"></div><div class="t" style="left:1317px;top:82.78px;font-size:12.4px;font-weight:bold;letter-spacing:0.35px;">Množství zm...</div><div class="t" style="left:1321px;top:103.89px;font-size:12.5px;">Stejné</div><svg class="a" style="left:1398px;top:108px" width="10" height="6" viewBox="0 0 10 6"><path d="M0.5 0.5 L5 5 L9.5 0.5" fill="none" stroke="#444" stroke-width="1"/></svg><div class="a" style="left:1416px;top:77px;width:1px;height:21px;background:#fbfbfb"></div><div class="a" style="left:1416px;top:99px;width:1px;height:22px;background:#ffffff"></div><div class="a" style="left:1416px;top:77px;width:40px;height:1px;background:#fbfbfb"></div><div class="a" style="left:1456px;top:77px;width:1px;height:67px;background:#7c7c7c"></div><div class="t" style="left:1419px;top:82.78px;font-size:12.4px;font-weight:bold;letter-spacing:0.35px;">MerJ</div><div class="t" style="left:1423px;top:103.89px;font-size:12.5px;">...</div><svg class="a" style="left:1439px;top:108px" width="10" height="6" viewBox="0 0 10 6"><path d="M0.5 0.5 L5 5 L9.5 0.5" fill="none" stroke="#444" stroke-width="1"/></svg><div class="a" style="left:1457px;top:77px;width:1px;height:21px;background:#fbfbfb"></div><div class="a" style="left:1457px;top:99px;width:1px;height:22px;background:#ffffff"></div><div class="a" style="left:1457px;top:77px;width:90px;height:1px;background:#fbfbfb"></div><div class="a" style="left:1547px;top:77px;width:1px;height:67px;background:#7c7c7c"></div><div class="t" style="left:1460px;top:82.78px;font-size:12.4px;font-weight:bold;letter-spacing:0.35px;">Plánovaný ...</div><div class="t" style="left:1464px;top:103.89px;font-size:12.5px;">Stejné</div><svg class="a" style="left:1530px;top:108px" width="10" height="6" viewBox="0 0 10 6"><path d="M0.5 0.5 L5 5 L9.5 0.5" fill="none" stroke="#444" stroke-width="1"/></svg><div class="a" style="left:1548px;top:77px;width:1px;height:21px;background:#fbfbfb"></div><div class="a" style="left:1548px;top:99px;width:1px;height:22px;background:#ffffff"></div><div class="a" style="left:1548px;top:77px;width:84px;height:1px;background:#fbfbfb"></div><div class="a" style="left:1632px;top:77px;width:1px;height:67px;background:#7c7c7c"></div><div class="t" style="left:1551px;top:82.78px;font-size:12.4px;font-weight:bold;letter-spacing:0.35px;">Skutečný ...</div><div class="t" style="left:1555px;top:103.89px;font-size:12.5px;">Stejné</div><svg class="a" style="left:1615px;top:108px" width="10" height="6" viewBox="0 0 10 6"><path d="M0.5 0.5 L5 5 L9.5 0.5" fill="none" stroke="#444" stroke-width="1"/></svg><div class="a" style="left:1633px;top:77px;width:1px;height:21px;background:#fbfbfb"></div><div class="a" style="left:1633px;top:99px;width:1px;height:22px;background:#ffffff"></div><div class="a" style="left:1633px;top:77px;width:107px;height:1px;background:#fbfbfb"></div><div class="a" style="left:1740px;top:77px;width:1px;height:67px;background:#7c7c7c"></div><div class="t" style="left:1636px;top:82.78px;font-size:12.4px;font-weight:bold;letter-spacing:0.35px;">Ukončení ope...</div><div class="t" style="left:1640px;top:103.89px;font-size:12.5px;">Stejné</div><svg class="a" style="left:1723px;top:108px" width="10" height="6" viewBox="0 0 10 6"><path d="M0.5 0.5 L5 5 L9.5 0.5" fill="none" stroke="#444" stroke-width="1"/></svg><div class="a" style="left:1741px;top:77px;width:1px;height:21px;background:#fbfbfb"></div><div class="a" style="left:1741px;top:99px;width:1px;height:22px;background:#ffffff"></div><div class="a" style="left:1741px;top:77px;width:73px;height:1px;background:#fbfbfb"></div><div class="a" style="left:1814px;top:77px;width:1px;height:67px;background:#7c7c7c"></div><div class="t" style="left:1744px;top:82.78px;font-size:12.4px;font-weight:bold;letter-spacing:0.35px;">Stav řá...</div><div class="t" style="left:1748px;top:103.89px;font-size:12.5px;">Bez v...</div><svg class="a" style="left:1797px;top:108px" width="10" height="6" viewBox="0 0 10 6"><path d="M0.5 0.5 L5 5 L9.5 0.5" fill="none" stroke="#444" stroke-width="1"/></svg><div class="a" style="left:238px;top:145px;width:20px;height:18px;background:#f0f0f0;border-bottom:1px solid #a0a0a0"></div><div class="a" style="left:242px;top:147px;width:13px;height:13px;background:linear-gradient(135deg,#fdfdfd,#d8d8d8);border:1px solid #8a8a8a"></div><svg class="a" style="left:244px;top:149px" width="10" height="10" viewBox="0 0 10 10"><path d="M1.5 5 L4 8.5 L8.5 1" fill="none" stroke="#2b3e8c" stroke-width="1.7"/></svg><div class="a" style="left:258px;top:145px;width:1545px;height:18px;background:#87c0f9;border-bottom:1px solid #a0a0a0"></div><div class="t" style="left:261px;top:146.69px;font-size:12.5px;color:#eef6ff">sériová</div><div class="t" style="left:343px;top:146.69px;font-size:12.5px;width:82px;text-align:right;color:#eef6ff">1121</div><div class="t" style="left:428px;top:146.69px;font-size:12.5px;width:90px;text-align:right;color:#eef6ff">1</div><div class="t" style="left:549px;top:146.69px;font-size:12.5px;color:#eef6ff">120</div><div class="t" style="left:629px;top:146.69px;font-size:12.5px;color:#eef6ff">výrobek ...</div><div class="t" style="left:698px;top:146.69px;font-size:12.5px;width:58px;text-align:right;color:#eef6ff">200</div><div class="t" style="left:763px;top:146.69px;font-size:12.5px;color:#eef6ff">M</div><div class="t" style="left:869px;top:146.69px;font-size:12.5px;width:50px;text-align:right;color:#eef6ff">859</div><div class="t" style="left:926px;top:146.69px;font-size:12.5px;color:#eef6ff">200000</div><div class="t" style="left:986px;top:146.69px;font-size:12.5px;width:85px;text-align:right;color:#eef6ff">2,00</div><div class="t" style="left:1074px;top:146.69px;font-size:12.5px;width:121px;text-align:right;color:#eef6ff">0,00</div><div class="t" style="left:1198px;top:146.69px;font-size:12.5px;width:112px;text-align:right;color:#eef6ff">0,00</div><div class="t" style="left:1313px;top:146.69px;font-size:12.5px;width:99px;text-align:right;color:#eef6ff">0,00</div><div class="t" style="left:1419px;top:146.69px;font-size:12.5px;color:#eef6ff">ks</div><div class="t" style="left:1456px;top:146.69px;font-size:12.5px;width:88px;text-align:right;color:#eef6ff">0,33</div><div class="t" style="left:1547px;top:146.69px;font-size:12.5px;width:82px;text-align:right;color:#eef6ff">0,00</div><div class="t" style="left:1636px;top:146.69px;font-size:12.5px;color:#eef6ff">J</div><div class="t" style="left:1744px;top:146.69px;font-size:12.5px;color:#eef6ff">aktivní</div><div class="a" style="left:238px;top:163px;width:20px;height:18px;background:#f0f0f0;border-bottom:1px solid #a0a0a0"></div><div class="a" style="left:242px;top:165px;width:13px;height:13px;background:linear-gradient(135deg,#fdfdfd,#d8d8d8);border:1px solid #8a8a8a"></div><svg class="a" style="left:244px;top:167px" width="10" height="10" viewBox="0 0 10 10"><path d="M1.5 5 L4 8.5 L8.5 1" fill="none" stroke="#2b3e8c" stroke-width="1.7"/></svg><div class="a" style="left:258px;top:163px;width:1545px;height:18px;background:#a66566;border-bottom:1px solid #a0a0a0"></div><div class="t" style="left:261px;top:164.69px;font-size:12.5px;color:#ffffff">sériová</div><div class="t" style="left:343px;top:164.69px;font-size:12.5px;width:82px;text-align:right;color:#ffffff">1121</div><div class="t" style="left:428px;top:164.69px;font-size:12.5px;width:90px;text-align:right;color:#ffffff">1</div><div class="t" style="left:549px;top:164.69px;font-size:12.5px;color:#ffffff">120</div><div class="t" style="left:629px;top:164.69px;font-size:12.5px;color:#ffffff">výrobek ...</div><div class="t" style="left:698px;top:164.69px;font-size:12.5px;width:58px;text-align:right;color:#ffffff">300</div><div class="t" style="left:763px;top:164.69px;font-size:12.5px;color:#ffffff">M</div><div class="t" style="left:804px;top:164.69px;font-size:12.5px;color:#ffffff">BRUSKA</div><div class="t" style="left:869px;top:164.69px;font-size:12.5px;width:50px;text-align:right;color:#ffffff">115636</div><div class="t" style="left:926px;top:164.69px;font-size:12.5px;color:#ffffff">231113</div><div class="t" style="left:986px;top:164.69px;font-size:12.5px;width:85px;text-align:right;color:#ffffff">2,00</div><div class="t" style="left:1074px;top:164.69px;font-size:12.5px;width:121px;text-align:right;color:#ffffff">0,00</div><div class="t" style="left:1198px;top:164.69px;font-size:12.5px;width:112px;text-align:right;color:#ffffff">0,00</div><div class="t" style="left:1313px;top:164.69px;font-size:12.5px;width:99px;text-align:right;color:#ffffff">0,00</div><div class="t" style="left:1419px;top:164.69px;font-size:12.5px;color:#ffffff">ks</div><div class="t" style="left:1456px;top:164.69px;font-size:12.5px;width:88px;text-align:right;color:#ffffff">2,25</div><div class="t" style="left:1547px;top:164.69px;font-size:12.5px;width:82px;text-align:right;color:#ffffff">0,00</div><div class="t" style="left:1636px;top:164.69px;font-size:12.5px;color:#ffffff">J</div><div class="t" style="left:1744px;top:164.69px;font-size:12.5px;color:#ffffff">aktivní</div><div class="a" style="left:238px;top:181px;width:20px;height:18px;background:#f0f0f0;border-bottom:1px solid #a0a0a0"></div><div class="a" style="left:242px;top:183px;width:13px;height:13px;background:linear-gradient(135deg,#fdfdfd,#d8d8d8);border:1px solid #8a8a8a"></div><div class="a" style="left:258px;top:181px;width:1545px;height:18px;background:#ffffff;border-bottom:1px solid #a0a0a0"></div><div class="t" style="left:261px;top:182.69px;font-size:12.5px;color:#000000">sériová</div><div class="t" style="left:343px;top:182.69px;font-size:12.5px;width:82px;text-align:right;color:#000000">1121</div><div class="t" style="left:428px;top:182.69px;font-size:12.5px;width:90px;text-align:right;color:#000000">1</div><div class="t" style="left:549px;top:182.69px;font-size:12.5px;color:#000000">120</div><div class="t" style="left:629px;top:182.69px;font-size:12.5px;color:#000000">výrobek ...</div><div class="t" style="left:698px;top:182.69px;font-size:12.5px;width:58px;text-align:right;color:#000000">400</div><div class="t" style="left:763px;top:182.69px;font-size:12.5px;color:#000000">M</div><div class="t" style="left:804px;top:182.69px;font-size:12.5px;color:#000000">SOUSTR...</div><div class="t" style="left:869px;top:182.69px;font-size:12.5px;width:50px;text-align:right;color:#000000">904121</div><div class="t" style="left:926px;top:182.69px;font-size:12.5px;color:#000000">239000</div><div class="t" style="left:986px;top:182.69px;font-size:12.5px;width:85px;text-align:right;color:#000000">2,00</div><div class="t" style="left:1074px;top:182.69px;font-size:12.5px;width:121px;text-align:right;color:#000000">0,00</div><div class="t" style="left:1198px;top:182.69px;font-size:12.5px;width:112px;text-align:right;color:#000000">0,00</div><div class="t" style="left:1313px;top:182.69px;font-size:12.5px;width:99px;text-align:right;color:#000000">0,00</div><div class="t" style="left:1419px;top:182.69px;font-size:12.5px;color:#000000">ks</div><div class="t" style="left:1456px;top:182.69px;font-size:12.5px;width:88px;text-align:right;color:#000000">1,00</div><div class="t" style="left:1547px;top:182.69px;font-size:12.5px;width:82px;text-align:right;color:#000000">0,00</div><div class="t" style="left:1636px;top:182.69px;font-size:12.5px;color:#000000">N</div><div class="t" style="left:1744px;top:182.69px;font-size:12.5px;color:#000000">aktivní</div><div class="a" style="left:238px;top:199px;width:20px;height:18px;background:#f0f0f0;border-bottom:1px solid #a0a0a0"></div><div class="a" style="left:242px;top:201px;width:13px;height:13px;background:linear-gradient(135deg,#fdfdfd,#d8d8d8);border:1px solid #8a8a8a"></div><div class="a" style="left:258px;top:199px;width:1545px;height:18px;background:#dff2fd;border-bottom:1px solid #a0a0a0"></div><div class="t" style="left:261px;top:200.69px;font-size:12.5px;color:#000000">sériová</div><div class="t" style="left:343px;top:200.69px;font-size:12.5px;width:82px;text-align:right;color:#000000">1121</div><div class="t" style="left:428px;top:200.69px;font-size:12.5px;width:90px;text-align:right;color:#000000">1</div><div class="t" style="left:549px;top:200.69px;font-size:12.5px;color:#000000">120</div><div class="t" style="left:629px;top:200.69px;font-size:12.5px;color:#000000">výrobek ...</div><div class="t" style="left:698px;top:200.69px;font-size:12.5px;width:58px;text-align:right;color:#000000">8006</div><div class="t" style="left:763px;top:200.69px;font-size:12.5px;color:#000000">W</div><div class="t" style="left:804px;top:200.69px;font-size:12.5px;color:#000000">zámečni...</div><div class="t" style="left:869px;top:200.69px;font-size:12.5px;width:50px;text-align:right;color:#000000">208</div><div class="t" style="left:926px;top:200.69px;font-size:12.5px;color:#000000">200000</div><div class="t" style="left:986px;top:200.69px;font-size:12.5px;width:85px;text-align:right;color:#000000">2,00</div><div class="t" style="left:1074px;top:200.69px;font-size:12.5px;width:121px;text-align:right;color:#000000">0,00</div><div class="t" style="left:1198px;top:200.69px;font-size:12.5px;width:112px;text-align:right;color:#000000">0,00</div><div class="t" style="left:1313px;top:200.69px;font-size:12.5px;width:99px;text-align:right;color:#000000">0,00</div><div class="t" style="left:1419px;top:200.69px;font-size:12.5px;color:#000000">ks</div><div class="t" style="left:1456px;top:200.69px;font-size:12.5px;width:88px;text-align:right;color:#000000">0,33</div><div class="t" style="left:1547px;top:200.69px;font-size:12.5px;width:82px;text-align:right;color:#000000">0,00</div><div class="t" style="left:1636px;top:200.69px;font-size:12.5px;color:#000000">N</div><div class="t" style="left:1744px;top:200.69px;font-size:12.5px;color:#000000">aktivní</div><div class="a" style="left:257px;top:145px;width:1px;height:72px;background:#8c8c8c"></div><div class="a" style="left:343px;top:145px;width:1px;height:72px;background:#8c8c8c"></div><div class="a" style="left:428px;top:145px;width:1px;height:72px;background:#8c8c8c"></div><div class="a" style="left:521px;top:145px;width:1px;height:72px;background:#8c8c8c"></div><div class="a" style="left:625px;top:145px;width:1px;height:72px;background:#8c8c8c"></div><div class="a" style="left:698px;top:145px;width:1px;height:72px;background:#8c8c8c"></div><div class="a" style="left:759px;top:145px;width:1px;height:72px;background:#8c8c8c"></div><div class="a" style="left:800px;top:145px;width:1px;height:72px;background:#8c8c8c"></div><div class="a" style="left:869px;top:145px;width:1px;height:72px;background:#8c8c8c"></div><div class="a" style="left:922px;top:145px;width:1px;height:72px;background:#8c8c8c"></div><div class="a" style="left:986px;top:145px;width:1px;height:72px;background:#8c8c8c"></div><div class="a" style="left:1074px;top:145px;width:1px;height:72px;background:#8c8c8c"></div><div class="a" style="left:1198px;top:145px;width:1px;height:72px;background:#8c8c8c"></div><div class="a" style="left:1313px;top:145px;width:1px;height:72px;background:#8c8c8c"></div><div class="a" style="left:1415px;top:145px;width:1px;height:72px;background:#8c8c8c"></div><div class="a" style="left:1456px;top:145px;width:1px;height:72px;background:#8c8c8c"></div><div class="a" style="left:1547px;top:145px;width:1px;height:72px;background:#8c8c8c"></div><div class="a" style="left:1632px;top:145px;width:1px;height:72px;background:#8c8c8c"></div><div class="a" style="left:1740px;top:145px;width:1px;height:72px;background:#8c8c8c"></div><div class="a" style="left:257px;top:77px;width:1px;height:140px;background:#8c8c8c"></div><div class="a" style="left:258px;top:228px;width:1545px;height:1px;background:#fbfbfb"></div><div class="a" style="left:279px;top:236px;width:1524px;height:6px;background:#878787"></div><div class="a" style="left:237px;top:249px;width:1566px;height:1px;background:#6e6e6e"></div><div class="a" style="left:237px;top:250px;width:1566px;height:4px;background:#f7f7f7"></div><div class="a" style="left:237px;top:254px;width:1566px;height:2px;background:#6e6e6e"></div><div class="a" style="left:237px;top:886px;width:1566px;height:1px;background:#6e6e6e"></div><div class="a" style="left:232px;top:887px;width:1571px;height:1px;background:#e6ecf4"></div><div class="a" style="left:232px;top:888px;width:1571px;height:3px;background:#a0b6d4"></div><div class="a" style="left:232px;top:891px;width:1571px;height:10px;background:#f0f0f0"></div><div class="a" style="left:352px;top:891px;width:1px;height:10px;background:#8a8a8a"></div><div class="a" style="left:632px;top:891px;width:1px;height:10px;background:#8a8a8a"></div><div class="a" style="left:672px;top:891px;width:1px;height:10px;background:#8a8a8a"></div><div class="a" style="left:752px;top:891px;width:1px;height:10px;background:#8a8a8a"></div><div class="a" style="left:992px;top:891px;width:1px;height:10px;background:#8a8a8a"></div><div class="t" style="left:238px;top:893.69px;font-size:12.5px;">CZakOperWrapper</div><div class="t" style="left:358px;top:893.69px;font-size:12.5px;">CZakOper(V)</div><div class="t" style="left:678px;top:893.69px;font-size:12.5px;">12.10.2022</div><div class="t" style="left:758px;top:893.69px;font-size:12.5px;">Vybráno 2 záznamy</div><div class="a" style="left:943px;top:892px;width:21px;height:14px;background:#fdfdfd;border:1px solid #c8c8c8;border-radius:5px"></div><div class="a" style="left:971px;top:892px;width:21px;height:14px;background:#fdfdfd;border:1px solid #c8c8c8;border-radius:5px"></div><div class="a" style="left:948px;top:896px;width:10px;height:8px;background:linear-gradient(#9ccaf8,#5aa8f8)"></div><div class="a" style="left:951px;top:898px;width:4px;height:6px;background:#222"></div><div class="a" style="left:952px;top:899px;width:2px;height:5px;background:#ddd"></div><svg class="a" style="left:975px;top:896px" width="11" height="8" viewBox="0 0 11 8"><path d="M0.5 1 q5 -2 10 0 l-3.5 4 v3 h-3 v-3z" fill="#2a90d0"/><path d="M1 1.8 q4.5 1.2 9 0" stroke="#e0a020" stroke-width="0.9" fill="none"/></svg><div class="a" style="left:240px;top:262px;width:1600px;height:54px;border:1px solid #9fb5d2;border-radius:4px;box-shadow:0 1px 0 #fff"></div><div class="a" style="left:247px;top:256px;width:108px;height:12px;background:#f0f0f0"></div><div class="t" style="left:249px;top:256.87px;font-size:12.3px;font-weight:bold;">Zakázkový postup</div><div class="t" style="left:263px;top:286.69px;font-size:12.5px;">Druh</div><div class="a" style="left:301px;top:282px;width:126px;height:24px;background:#fafafa;border:1px solid #acacac"></div><div class="t" style="left:306px;top:287.69px;font-size:12.5px;color:#333">sériová</div><svg class="a" style="left:412px;top:292px" width="10" height="6" viewBox="0 0 10 6"><path d="M0.5 0.5 L5 5 L9.5 0.5" fill="none" stroke="#9a9a9a" stroke-width="1"/></svg><div class="t" style="left:451px;top:286.69px;font-size:12.5px;">Číslo</div><div class="a" style="left:488px;top:282px;width:126px;height:24px;background:#e6e6e6;border:1px solid #acacac"></div><div class="t" style="left:488px;top:287.69px;font-size:12.5px;width:122px;text-align:right;color:#000">1121</div><div class="t" style="left:651px;top:286.69px;font-size:12.5px;">Řádek</div><div class="a" style="left:701px;top:282px;width:51px;height:24px;background:#e6e6e6;border:1px solid #acacac"></div><div class="t" style="left:701px;top:287.69px;font-size:12.5px;width:47px;text-align:right;color:#000">1</div><div class="t" style="left:788px;top:286.69px;font-size:12.5px;">Operace</div><div class="a" style="left:851px;top:282px;width:51px;height:24px;background:#e6e6e6;border:1px solid #acacac"></div><div class="t" style="left:851px;top:287.69px;font-size:12.5px;width:47px;text-align:right;color:#000">300</div><div class="t" style="left:938px;top:286.69px;font-size:12.5px;">Název</div><div class="a" style="left:988px;top:282px;width:126px;height:24px;background:#e6e6e6;border:1px solid #acacac"></div><div class="t" style="left:992px;top:287.69px;font-size:12.5px;color:#000">BRUSKA</div><div class="a" style="left:237px;top:322px;width:1566px;height:22px;background:#f0f0f0"></div><div class="a" style="left:363px;top:323px;width:104px;height:20px;background:#f3f3f3;border-right:1px solid #e0e0e0"></div><div class="a" style="left:467px;top:323px;width:116px;height:20px;background:#f3f3f3;border-right:1px solid #e0e0e0"></div><div class="a" style="left:583px;top:323px;width:130px;height:20px;background:#f3f3f3;border-right:1px solid #e0e0e0"></div><div class="a" style="left:713px;top:323px;width:144px;height:20px;background:#f3f3f3;border-right:1px solid #e0e0e0"></div><div class="a" style="left:857px;top:323px;width:137px;height:20px;background:#f3f3f3;border-right:1px solid #e0e0e0"></div><div class="a" style="left:994px;top:323px;width:118px;height:20px;background:#f3f3f3;border-right:1px solid #e0e0e0"></div><div class="a" style="left:239px;top:321px;width:124px;height:23px;background:#9b9bfb;border-right:2px solid #6a6a6a"></div><div class="t" style="left:265px;top:324.35px;font-size:13.2px;font-weight:bold;">Základní údaje</div><div class="t" style="left:389px;top:326.69px;font-size:12.5px;">Časy a mzdy</div><div class="t" style="left:492px;top:326.69px;font-size:12.5px;">Hlášené výkony</div><div class="t" style="left:610px;top:326.69px;font-size:12.5px;">Neshodná výroba</div><div class="t" style="left:739px;top:326.69px;font-size:12.5px;">Zaknihované výkony</div><div class="t" style="left:883px;top:326.69px;font-size:12.5px;">Nářaďové operace</div><div class="t" style="left:1000px;top:326.69px;font-size:12.5px;">Uživatelské atributy</div><div class="a" style="left:237px;top:343px;width:1566px;height:2px;background:#fbfbfb"></div><svg class="a" style="left:245px;top:324px" width="16" height="16" viewBox="0 0 16 16"><path d="M1 1.2h6M9 1.2h6" stroke="#999" stroke-width="1.3"/><path d="M1 4.2h6M9 4.2h6" stroke="#e04040" stroke-width="1.3"/><path d="M1 7.5h3M1 11h3" stroke="#666" stroke-width="1.2"/><g fill="none" stroke="#2a70c8" stroke-width="1.2"><rect x="4.5" y="6.5" width="11" height="3" rx="1"/><rect x="4.5" y="12" width="11" height="3" rx="1"/></g></svg><svg class="a" style="left:369px;top:325px" width="16" height="16" viewBox="0 0 16 16"><path d="M1 1.2h6M9 1.2h6" stroke="#999" stroke-width="1.3"/><path d="M1 4.2h6M9 4.2h6" stroke="#e04040" stroke-width="1.3"/><path d="M1 7.5h3M1 11h3" stroke="#666" stroke-width="1.2"/><g fill="none" stroke="#2a70c8" stroke-width="1.2"><rect x="4.5" y="6.5" width="11" height="3" rx="1"/><rect x="4.5" y="12" width="11" height="3" rx="1"/></g></svg><svg class="a" style="left:473px;top:325px" width="17" height="16" viewBox="0 0 17 16"><path d="M1 5 h4 l6 -4 v10 l-6 -3 h-4z" fill="#f4f4f4" stroke="#777" stroke-width="1"/><g fill="#fff" stroke="#3a7ac0" stroke-width="1"><rect x="5" y="8" width="11" height="3" rx="0.5"/><rect x="5" y="12.5" width="11" height="3" rx="0.5"/></g></svg><svg class="a" style="left:590px;top:325px" width="17" height="16" viewBox="0 0 17 16"><circle cx="5.5" cy="5.5" r="4.8" fill="#fff" stroke="#e03030" stroke-width="1.2"/><path d="M3.5 3.5l4 4M7.5 3.5l-4 4" stroke="#e03030" stroke-width="1.1"/><g fill="#fff" stroke="#3a7ac0" stroke-width="1"><rect x="5" y="8" width="11" height="3" rx="0.5"/><rect x="5" y="12.5" width="11" height="3" rx="0.5"/></g></svg><svg class="a" style="left:719px;top:325px" width="16" height="16" viewBox="0 0 16 16"><rect x="0.8" y="0.8" width="14.4" height="3" rx="1" fill="#f4f4f4" stroke="#666" stroke-width="1.2"/><path d="M2 4 h12 v11 h-12z" fill="#f4f4f4" stroke="#666" stroke-width="1.2"/><rect x="4" y="6" width="7" height="3" fill="#e0a020"/><rect x="5" y="10" width="8" height="3.5" fill="#e0a020"/></svg><svg class="a" style="left:864px;top:325px" width="16" height="16" viewBox="0 0 16 16"><path d="M1 1.2h6M9 1.2h6" stroke="#999" stroke-width="1.3"/><path d="M1 4.2h6M9 4.2h6" stroke="#e04040" stroke-width="1.3"/><path d="M1 7.5h3M1 11h3" stroke="#666" stroke-width="1.2"/><g fill="none" stroke="#2a70c8" stroke-width="1.2"><rect x="4.5" y="6.5" width="11" height="3" rx="1"/><rect x="4.5" y="12" width="11" height="3" rx="1"/></g></svg><div class="a" style="left:242px;top:367px;width:559px;height:338px;border:1px solid #9fb5d2;border-radius:4px;box-shadow:inset 1px 1px 0 #fff, 1px 1px 0 #fff"></div><div class="a" style="left:249px;top:361px;width:64px;height:12px;background:#f0f0f0"></div><div class="t" style="left:251px;top:360.42px;font-size:12.8px;font-weight:bold;letter-spacing:1.0px;">Zakázka</div><div class="t" style="left:253px;top:389.69px;font-size:12.5px;">Zakázka</div><div class="t" style="left:253px;top:414.69px;font-size:12.5px;">Druh</div><div class="t" style="left:253px;top:439.69px;font-size:12.5px;">Operace</div><div class="t" style="left:253px;top:464.69px;font-size:12.5px;">Název</div><div class="t" style="left:253px;top:489.69px;font-size:12.5px;">Popis</div><div class="t" style="left:253px;top:514.69px;font-size:12.5px;">Plánovaný stroj</div><div class="t" style="left:253px;top:539.69px;font-size:12.5px;">Náhradní stroj</div><div class="t" style="left:253px;top:564.69px;font-size:12.5px;">Skutečný stroj</div><div class="t" style="left:253px;top:589.69px;font-size:12.5px;">Profese</div><div class="t" style="left:253px;top:614.69px;font-size:12.5px;">Středisko</div><div class="t" style="left:253px;top:639.69px;font-size:12.5px;">Místo dodání</div><div class="t" style="left:253px;top:664.69px;font-size:12.5px;">Středisko násled.</div><div class="a" style="left:365px;top:384px;width:126px;height:24px;background:#fafafa;border:1px solid #acacac"></div><div class="t" style="left:370px;top:389.69px;font-size:12.5px;color:#333">sériová</div><svg class="a" style="left:476px;top:394px" width="10" height="6" viewBox="0 0 10 6"><path d="M0.5 0.5 L5 5 L9.5 0.5" fill="none" stroke="#9a9a9a" stroke-width="1"/></svg><div class="a" style="left:503px;top:384px;width:101px;height:24px;background:#e6e6e6;border:1px solid #acacac"></div><div class="t" style="left:503px;top:389.69px;font-size:12.5px;width:97px;text-align:right;color:#000">1121</div><div class="a" style="left:615px;top:384px;width:64px;height:24px;background:#e6e6e6;border:1px solid #acacac"></div><div class="t" style="left:615px;top:389.69px;font-size:12.5px;width:60px;text-align:right;color:#000">1</div><div class="a" style="left:365px;top:409px;width:39px;height:24px;background:#e6e6e6;border:1px solid #acacac"></div><div class="t" style="left:369px;top:414.69px;font-size:12.5px;color:#000">M</div><div class="a" style="left:365px;top:434px;width:64px;height:24px;background:#e6e6e6;border:1px solid #acacac"></div><div class="t" style="left:365px;top:439.69px;font-size:12.5px;width:60px;text-align:right;color:#000">300</div><div class="t" style="left:503px;top:439.69px;font-size:12.5px;">Katalog op.</div><div class="a" style="left:578px;top:434px;width:64px;height:24px;background:#e6e6e6;border:1px solid #acacac"></div><div class="a" style="left:626px;top:434px;width:16px;height:24px;background:#a2a2a2;border:1px solid #8c8c8c"></div><div class="t" style="left:578px;top:439.69px;font-size:12.5px;width:44px;text-align:right;color:#000">300</div><svg class="a" style="left:630px;top:439px" width="8" height="12" viewBox="0 0 8 12"><path d="M4 1v6M1.5 4.5L4 7.5L6.5 4.5" fill="none" stroke="#8a8a8a" stroke-width="1.2"/><path d="M1 10h6" stroke="#8a8a8a" stroke-width="1"/></svg><div class="t" style="left:653px;top:437.69px;font-size:12.5px;color:#8a0a8a;letter-spacing:-0.6px">BRUSKA</div><div class="a" style="left:365px;top:459px;width:126px;height:24px;background:#e6e6e6;border:1px solid #acacac"></div><div class="t" style="left:369px;top:464.69px;font-size:12.5px;color:#000">BRUSKA</div><div class="a" style="left:365px;top:484px;width:389px;height:24px;background:#e6e6e6;border:1px solid #acacac"></div><div class="a" style="left:365px;top:509px;width:126px;height:24px;background:#e6e6e6;border:1px solid #acacac"></div><div class="a" style="left:475px;top:509px;width:16px;height:24px;background:#a2a2a2;border:1px solid #8c8c8c"></div><div class="t" style="left:365px;top:514.69px;font-size:12.5px;width:106px;text-align:right;color:#000">115636</div><svg class="a" style="left:479px;top:514px" width="8" height="12" viewBox="0 0 8 12"><path d="M4 1v6M1.5 4.5L4 7.5L6.5 4.5" fill="none" stroke="#8a8a8a" stroke-width="1.2"/><path d="M1 10h6" stroke="#8a8a8a" stroke-width="1"/></svg><div class="t" style="left:503px;top:512.69px;font-size:12.5px;color:#8a0a8a;letter-spacing:-0.6px">BRUSKA</div><div class="a" style="left:365px;top:534px;width:126px;height:24px;background:#e6e6e6;border:1px solid #acacac"></div><div class="a" style="left:475px;top:534px;width:16px;height:24px;background:#a2a2a2;border:1px solid #8c8c8c"></div><div class="t" style="left:365px;top:539.69px;font-size:12.5px;width:106px;text-align:right;color:#000">0</div><svg class="a" style="left:479px;top:539px" width="8" height="12" viewBox="0 0 8 12"><path d="M4 1v6M1.5 4.5L4 7.5L6.5 4.5" fill="none" stroke="#8a8a8a" stroke-width="1.2"/><path d="M1 10h6" stroke="#8a8a8a" stroke-width="1"/></svg><div class="a" style="left:365px;top:559px;width:126px;height:24px;background:#e6e6e6;border:1px solid #acacac"></div><div class="t" style="left:365px;top:564.69px;font-size:12.5px;width:122px;text-align:right;color:#000">0</div><div class="a" style="left:365px;top:584px;width:126px;height:24px;background:#e6e6e6;border:1px solid #acacac"></div><div class="a" style="left:475px;top:584px;width:16px;height:24px;background:#a2a2a2;border:1px solid #8c8c8c"></div><div class="t" style="left:365px;top:589.69px;font-size:12.5px;width:106px;text-align:right;color:#000">300</div><svg class="a" style="left:479px;top:589px" width="8" height="12" viewBox="0 0 8 12"><path d="M4 1v6M1.5 4.5L4 7.5L6.5 4.5" fill="none" stroke="#8a8a8a" stroke-width="1.2"/><path d="M1 10h6" stroke="#8a8a8a" stroke-width="1"/></svg><div class="t" style="left:503px;top:587.69px;font-size:12.5px;color:#8a0a8a">brusič1</div><div class="a" style="left:365px;top:609px;width:126px;height:24px;background:#e6e6e6;border:1px solid #acacac"></div><div class="a" style="left:475px;top:609px;width:16px;height:24px;background:#a2a2a2;border:1px solid #8c8c8c"></div><div class="t" style="left:369px;top:614.69px;font-size:12.5px;color:#000">231113</div><svg class="a" style="left:479px;top:614px" width="8" height="12" viewBox="0 0 8 12"><path d="M4 1v6M1.5 4.5L4 7.5L6.5 4.5" fill="none" stroke="#8a8a8a" stroke-width="1.2"/><path d="M1 10h6" stroke="#8a8a8a" stroke-width="1"/></svg><div class="t" style="left:503px;top:612.69px;font-size:12.5px;color:#8a0a8a">Dílna motory</div><div class="a" style="left:365px;top:634px;width:126px;height:24px;background:#e6e6e6;border:1px solid #acacac"></div><div class="a" style="left:475px;top:634px;width:16px;height:24px;background:#a2a2a2;border:1px solid #8c8c8c"></div><svg class="a" style="left:479px;top:639px" width="8" height="12" viewBox="0 0 8 12"><path d="M4 1v6M1.5 4.5L4 7.5L6.5 4.5" fill="none" stroke="#8a8a8a" stroke-width="1.2"/><path d="M1 10h6" stroke="#8a8a8a" stroke-width="1"/></svg><div class="a" style="left:365px;top:659px;width:126px;height:24px;background:#e6e6e6;border:1px solid #acacac"></div><div class="a" style="left:475px;top:659px;width:16px;height:24px;background:#a2a2a2;border:1px solid #8c8c8c"></div><svg class="a" style="left:479px;top:664px" width="8" height="12" viewBox="0 0 8 12"><path d="M4 1v6M1.5 4.5L4 7.5L6.5 4.5" fill="none" stroke="#8a8a8a" stroke-width="1.2"/><path d="M1 10h6" stroke="#8a8a8a" stroke-width="1"/></svg><div class="a" style="left:242px;top:717px;width:309px;height:126px;border:1px solid #9fb5d2;border-radius:4px;box-shadow:inset 1px 1px 0 #fff, 1px 1px 0 #fff"></div><div class="a" style="left:249px;top:711px;width:122px;height:12px;background:#f0f0f0"></div><div class="t" style="left:251px;top:710.42px;font-size:12.8px;font-weight:bold;letter-spacing:0.6px;">Systémové údaje</div><div class="t" style="left:253px;top:739.69px;font-size:12.5px;">ID záznamu</div><div class="a" style="left:328px;top:734px;width:101px;height:24px;background:#e6e6e6;border:1px solid #acacac"></div><div class="t" style="left:328px;top:739.69px;font-size:12.5px;width:97px;text-align:right;color:#000">215234</div><div class="t" style="left:253px;top:764.69px;font-size:12.5px;">Založení</div><div class="a" style="left:328px;top:759px;width:101px;height:24px;background:#e6e6e6;border:1px solid #acacac"></div><div class="t" style="left:332px;top:764.69px;font-size:12.5px;color:#000">makovcov</div><div class="a" style="left:440px;top:759px;width:101px;height:24px;background:#e6e6e6;border:1px solid #acacac"></div><div class="a" style="left:525px;top:759px;width:16px;height:24px;background:#969696;border:1px solid #7c7c7c"></div><div class="t" style="left:444px;top:764.69px;font-size:12.5px;color:#000">22.09.2021</div><svg class="a" style="left:528px;top:763px" width="10" height="16" viewBox="0 0 10 16"><rect x="0.5" y="2" width="9" height="12" fill="none" stroke="#8e8e8e" stroke-width="0.8"/><rect x="1" y="2.5" width="4" height="2" fill="#888"/><g fill="#b4b4b4"><rect x="1.5" y="6" width="2" height="1.5"/><rect x="4.5" y="6" width="2" height="1.5"/><rect x="7" y="6" width="1.5" height="1.5"/><rect x="1.5" y="9" width="2" height="1.5"/><rect x="4.5" y="9" width="2" height="1.5"/><rect x="7" y="9" width="1.5" height="1.5"/><rect x="1.5" y="12" width="7" height="1"/></g></svg><div class="t" style="left:253px;top:789.69px;font-size:12.5px;">Aktualizace</div><div class="a" style="left:328px;top:784px;width:101px;height:24px;background:#e6e6e6;border:1px solid #acacac"></div><div class="t" style="left:332px;top:789.69px;font-size:12.5px;color:#000">slavik</div><div class="a" style="left:440px;top:784px;width:101px;height:24px;background:#e6e6e6;border:1px solid #acacac"></div><div class="a" style="left:525px;top:784px;width:16px;height:24px;background:#969696;border:1px solid #7c7c7c"></div><div class="t" style="left:444px;top:789.69px;font-size:12.5px;color:#000">12.10.2022</div><svg class="a" style="left:528px;top:788px" width="10" height="16" viewBox="0 0 10 16"><rect x="0.5" y="2" width="9" height="12" fill="none" stroke="#8e8e8e" stroke-width="0.8"/><rect x="1" y="2.5" width="4" height="2" fill="#888"/><g fill="#b4b4b4"><rect x="1.5" y="6" width="2" height="1.5"/><rect x="4.5" y="6" width="2" height="1.5"/><rect x="7" y="6" width="1.5" height="1.5"/><rect x="1.5" y="9" width="2" height="1.5"/><rect x="4.5" y="9" width="2" height="1.5"/><rect x="7" y="9" width="1.5" height="1.5"/><rect x="1.5" y="12" width="7" height="1"/></g></svg><div class="t" style="left:253px;top:814.69px;font-size:12.5px;">ID stadardní operace</div><div class="a" style="left:440px;top:809px;width:101px;height:24px;background:#e6e6e6;border:1px solid #acacac"></div><div class="t" style="left:440px;top:814.69px;font-size:12.5px;width:97px;text-align:right;color:#000">228192</div><div class="a" style="left:817px;top:367px;width:371px;height:127px;border:1px solid #9fb5d2;border-radius:4px;box-shadow:inset 1px 1px 0 #fff, 1px 1px 0 #fff"></div><div class="a" style="left:824px;top:361px;width:66px;height:12px;background:#f0f0f0"></div><div class="t" style="left:826px;top:360.42px;font-size:12.8px;font-weight:bold;letter-spacing:0.6px;">Množství</div><div class="a" style="left:980px;top:384px;width:174px;height:24px;background:#fafafa;border:1px solid #acacac"></div><svg class="a" style="left:1139px;top:394px" width="10" height="6" viewBox="0 0 10 6"><path d="M0.5 0.5 L5 5 L9.5 0.5" fill="none" stroke="#9a9a9a" stroke-width="1"/></svg><div class="a" style="left:980px;top:409px;width:174px;height:24px;background:#fafafa;border:1px solid #acacac"></div><svg class="a" style="left:1139px;top:419px" width="10" height="6" viewBox="0 0 10 6"><path d="M0.5 0.5 L5 5 L9.5 0.5" fill="none" stroke="#9a9a9a" stroke-width="1"/></svg><div class="a" style="left:980px;top:434px;width:174px;height:24px;background:#fafafa;border:1px solid #acacac"></div><svg class="a" style="left:1139px;top:444px" width="10" height="6" viewBox="0 0 10 6"><path d="M0.5 0.5 L5 5 L9.5 0.5" fill="none" stroke="#9a9a9a" stroke-width="1"/></svg><div class="a" style="left:980px;top:459px;width:174px;height:24px;background:#fafafa;border:1px solid #acacac"></div><svg class="a" style="left:1139px;top:469px" width="10" height="6" viewBox="0 0 10 6"><path d="M0.5 0.5 L5 5 L9.5 0.5" fill="none" stroke="#9a9a9a" stroke-width="1"/></svg><div class="a" style="left:817px;top:505px;width:296px;height:300px;border:1px solid #9fb5d2;border-radius:4px;box-shadow:inset 1px 1px 0 #fff, 1px 1px 0 #fff"></div><div class="t" style="left:828px;top:526.69px;font-size:12.5px;">Operativní dávka</div><div class="a" style="left:978px;top:521px;width:76px;height:24px;background:#e6e6e6;border:1px solid #acacac"></div><div class="t" style="left:978px;top:526.69px;font-size:12.5px;width:72px;text-align:right;color:#000">0,00</div><div class="t" style="left:828px;top:551.69px;font-size:12.5px;">Podíl přípravného času</div><div class="a" style="left:978px;top:546px;width:76px;height:24px;background:#e6e6e6;border:1px solid #acacac"></div><div class="t" style="left:978px;top:551.69px;font-size:12.5px;width:72px;text-align:right;color:#000">0</div><div class="t" style="left:828px;top:576.69px;font-size:12.5px;">Procento zhodnocení</div><div class="a" style="left:978px;top:571px;width:76px;height:24px;background:#e6e6e6;border:1px solid #acacac"></div><div class="t" style="left:978px;top:576.69px;font-size:12.5px;width:72px;text-align:right;color:#000">0,00</div><div class="t" style="left:828px;top:601.69px;font-size:12.5px;">Roztříštěnost</div><div class="a" style="left:978px;top:596px;width:76px;height:24px;background:#e6e6e6;border:1px solid #acacac"></div><div class="t" style="left:978px;top:601.69px;font-size:12.5px;width:72px;text-align:right;color:#000">0</div><div class="t" style="left:828px;top:626.69px;font-size:12.5px;">Překryvné množství</div><div class="a" style="left:978px;top:621px;width:76px;height:24px;background:#e6e6e6;border:1px solid #acacac"></div><div class="t" style="left:978px;top:626.69px;font-size:12.5px;width:72px;text-align:right;color:#000">0,00</div><div class="t" style="left:828px;top:651.69px;font-size:12.5px;">Skupina</div><div class="a" style="left:978px;top:646px;width:76px;height:24px;background:#e6e6e6;border:1px solid #acacac"></div><div class="t" style="left:978px;top:651.69px;font-size:12.5px;width:72px;text-align:right;color:#000">0</div><div class="t" style="left:828px;top:677.69px;font-size:12.5px;">Promítání operace</div><div class="a" style="left:978px;top:671px;width:126px;height:24px;background:#fafafa;border:1px solid #acacac"></div><svg class="a" style="left:1089px;top:681px" width="10" height="6" viewBox="0 0 10 6"><path d="M0.5 0.5 L5 5 L9.5 0.5" fill="none" stroke="#9a9a9a" stroke-width="1"/></svg><div class="t" style="left:828px;top:701.69px;font-size:12.5px;">Kód promítnutí</div><div class="a" style="left:978px;top:697px;width:51px;height:24px;background:#e6e6e6;border:1px solid #acacac"></div><div class="t" style="left:978px;top:702.69px;font-size:12.5px;width:47px;text-align:right;color:#000">0</div><div class="a" style="left:832px;top:724px;width:13px;height:13px;background:#f6f6f6;border:1px solid #b0b0b0"></div><svg class="a" style="left:834px;top:726px" width="10" height="10" viewBox="0 0 10 10"><path d="M1.5 5 L4 8.5 L8 1.2" fill="none" stroke="#2b3e8c" stroke-width="1.6"/></svg><div class="t" style="left:849px;top:723.69px;font-size:12.5px;color:#333">Ukončení operace</div><div class="a" style="left:832px;top:749px;width:13px;height:13px;background:#f6f6f6;border:1px solid #b0b0b0"></div><div class="t" style="left:849px;top:748.69px;font-size:12.5px;color:#333">Existuje doprovodný text</div><div class="a" style="left:832px;top:774px;width:13px;height:13px;background:#f6f6f6;border:1px solid #b0b0b0"></div><div class="t" style="left:849px;top:773.69px;font-size:12.5px;color:#333">Uvolnění v zásobníku práce</div><div class="a" style="left:1205px;top:366px;width:221px;height:114px;border:1px solid #9fb5d2;border-radius:4px;box-shadow:inset 1px 1px 0 #fff, 1px 1px 0 #fff"></div><div class="a" style="left:1212px;top:360px;width:60px;height:12px;background:#f0f0f0"></div><div class="t" style="left:1214px;top:360.92px;font-size:12.8px;font-weight:bold;letter-spacing:0.8px;">Termíny</div><div class="t" style="left:1216px;top:389.69px;font-size:12.5px;">Zahájení</div><div class="a" style="left:1291px;top:384px;width:115px;height:24px;background:#e6e6e6;border:1px solid #acacac"></div><div class="a" style="left:1390px;top:384px;width:16px;height:24px;background:#969696;border:1px solid #7c7c7c"></div><div class="t" style="left:1295px;top:389.69px;font-size:12.5px;color:#000">00.00.0000</div><svg class="a" style="left:1393px;top:388px" width="10" height="16" viewBox="0 0 10 16"><rect x="0.5" y="2" width="9" height="12" fill="none" stroke="#8e8e8e" stroke-width="0.8"/><rect x="1" y="2.5" width="4" height="2" fill="#888"/><g fill="#b4b4b4"><rect x="1.5" y="6" width="2" height="1.5"/><rect x="4.5" y="6" width="2" height="1.5"/><rect x="7" y="6" width="1.5" height="1.5"/><rect x="1.5" y="9" width="2" height="1.5"/><rect x="4.5" y="9" width="2" height="1.5"/><rect x="7" y="9" width="1.5" height="1.5"/><rect x="1.5" y="12" width="7" height="1"/></g></svg><div class="t" style="left:1216px;top:414.69px;font-size:12.5px;">Ukončení</div><div class="a" style="left:1291px;top:409px;width:115px;height:24px;background:#e6e6e6;border:1px solid #acacac"></div><div class="a" style="left:1390px;top:409px;width:16px;height:24px;background:#969696;border:1px solid #7c7c7c"></div><div class="t" style="left:1295px;top:414.69px;font-size:12.5px;color:#000">00.00.0000</div><svg class="a" style="left:1393px;top:413px" width="10" height="16" viewBox="0 0 10 16"><rect x="0.5" y="2" width="9" height="12" fill="none" stroke="#8e8e8e" stroke-width="0.8"/><rect x="1" y="2.5" width="4" height="2" fill="#888"/><g fill="#b4b4b4"><rect x="1.5" y="6" width="2" height="1.5"/><rect x="4.5" y="6" width="2" height="1.5"/><rect x="7" y="6" width="1.5" height="1.5"/><rect x="1.5" y="9" width="2" height="1.5"/><rect x="4.5" y="9" width="2" height="1.5"/><rect x="7" y="9" width="1.5" height="1.5"/><rect x="1.5" y="12" width="7" height="1"/></g></svg><div class="t" style="left:1216px;top:439.69px;font-size:12.5px;">Skutečný</div><div class="a" style="left:1291px;top:434px;width:115px;height:24px;background:#e6e6e6;border:1px solid #acacac"></div><div class="a" style="left:1390px;top:434px;width:16px;height:24px;background:#969696;border:1px solid #7c7c7c"></div><div class="t" style="left:1295px;top:439.69px;font-size:12.5px;color:#000">00.00.0000</div><svg class="a" style="left:1393px;top:438px" width="10" height="16" viewBox="0 0 10 16"><rect x="0.5" y="2" width="9" height="12" fill="none" stroke="#8e8e8e" stroke-width="0.8"/><rect x="1" y="2.5" width="4" height="2" fill="#888"/><g fill="#b4b4b4"><rect x="1.5" y="6" width="2" height="1.5"/><rect x="4.5" y="6" width="2" height="1.5"/><rect x="7" y="6" width="1.5" height="1.5"/><rect x="1.5" y="9" width="2" height="1.5"/><rect x="4.5" y="9" width="2" height="1.5"/><rect x="7" y="9" width="1.5" height="1.5"/><rect x="1.5" y="12" width="7" height="1"/></g></svg><div class="a" style="left:1130px;top:504px;width:295px;height:350px;border:1px solid #9fb5d2;border-radius:4px;box-shadow:inset 1px 1px 0 #fff, 1px 1px 0 #fff"></div><div class="a" style="left:1137px;top:498px;width:66px;height:12px;background:#f0f0f0"></div><div class="t" style="left:1139px;top:497.42px;font-size:12.8px;font-weight:bold;letter-spacing:0.0px;">N astavení</div><div class="a" style="left:1145px;top:524px;width:13px;height:13px;background:#f6f6f6;border:1px solid #b0b0b0"></div><div class="t" style="left:1162px;top:523.69px;font-size:12.5px;color:#333">Kmenová operace</div><div class="a" style="left:1145px;top:549px;width:13px;height:13px;background:#f6f6f6;border:1px solid #b0b0b0"></div><div class="t" style="left:1162px;top:548.69px;font-size:12.5px;color:#333">Lisování</div><div class="a" style="left:1145px;top:574px;width:13px;height:13px;background:#f6f6f6;border:1px solid #b0b0b0"></div><div class="t" style="left:1162px;top:573.69px;font-size:12.5px;color:#333">Balení</div><div class="a" style="left:1145px;top:599px;width:13px;height:13px;background:#f6f6f6;border:1px solid #b0b0b0"></div><div class="t" style="left:1162px;top:598.69px;font-size:12.5px;color:#333">Seskupení</div><div class="a" style="left:1145px;top:624px;width:13px;height:13px;background:#f6f6f6;border:1px solid #b0b0b0"></div><svg class="a" style="left:1147px;top:626px" width="10" height="10" viewBox="0 0 10 10"><path d="M1.5 5 L4 8.5 L8 1.2" fill="none" stroke="#2b3e8c" stroke-width="1.6"/></svg><div class="t" style="left:1162px;top:623.69px;font-size:12.5px;color:#333">Kalkulovat</div><div class="a" style="left:1145px;top:649px;width:13px;height:13px;background:#f6f6f6;border:1px solid #b0b0b0"></div><svg class="a" style="left:1147px;top:651px" width="10" height="10" viewBox="0 0 10 10"><path d="M1.5 5 L4 8.5 L8 1.2" fill="none" stroke="#2b3e8c" stroke-width="1.6"/></svg><div class="t" style="left:1162px;top:648.69px;font-size:12.5px;color:#333">Kapacitně bilancovat</div><div class="a" style="left:1145px;top:674px;width:13px;height:13px;background:#f6f6f6;border:1px solid #b0b0b0"></div><svg class="a" style="left:1147px;top:676px" width="10" height="10" viewBox="0 0 10 10"><path d="M1.5 5 L4 8.5 L8 1.2" fill="none" stroke="#2b3e8c" stroke-width="1.6"/></svg><div class="t" style="left:1162px;top:673.69px;font-size:12.5px;color:#333">Přerušení práce</div><div class="a" style="left:1145px;top:699px;width:13px;height:13px;background:#f6f6f6;border:1px solid #b0b0b0"></div><svg class="a" style="left:1147px;top:701px" width="10" height="10" viewBox="0 0 10 10"><path d="M1.5 5 L4 8.5 L8 1.2" fill="none" stroke="#2b3e8c" stroke-width="1.6"/></svg><div class="t" style="left:1162px;top:698.69px;font-size:12.5px;color:#333">Hlášenky</div><div class="a" style="left:1145px;top:724px;width:13px;height:13px;background:#f6f6f6;border:1px solid #b0b0b0"></div><svg class="a" style="left:1147px;top:726px" width="10" height="10" viewBox="0 0 10 10"><path d="M1.5 5 L4 8.5 L8 1.2" fill="none" stroke="#2b3e8c" stroke-width="1.6"/></svg><div class="t" style="left:1162px;top:723.69px;font-size:12.5px;color:#333">Průvodky</div><div class="a" style="left:1145px;top:749px;width:13px;height:13px;background:#f6f6f6;border:1px solid #b0b0b0"></div><svg class="a" style="left:1147px;top:751px" width="10" height="10" viewBox="0 0 10 10"><path d="M1.5 5 L4 8.5 L8 1.2" fill="none" stroke="#2b3e8c" stroke-width="1.6"/></svg><div class="t" style="left:1162px;top:748.69px;font-size:12.5px;color:#333">Mzdové lístky</div><div class="a" style="left:1145px;top:774px;width:13px;height:13px;background:#f6f6f6;border:1px solid #b0b0b0"></div><div class="t" style="left:1162px;top:773.69px;font-size:12.5px;color:#333">Tisk etiket</div><div class="t" style="left:1141px;top:801.69px;font-size:12.5px;">Tisk průvodní listiny</div><div class="a" style="left:1266px;top:797px;width:139px;height:24px;background:#fafafa;border:1px solid #acacac"></div><div class="t" style="left:1271px;top:802.69px;font-size:12.5px;color:#333">tisknout</div><svg class="a" style="left:1390px;top:807px" width="10" height="6" viewBox="0 0 10 6"><path d="M0.5 0.5 L5 5 L9.5 0.5" fill="none" stroke="#9a9a9a" stroke-width="1"/></svg><div class="t" style="left:1141px;top:826.69px;font-size:12.5px;">Tisk mzdových lístků</div><div class="a" style="left:1266px;top:822px;width:139px;height:24px;background:#fafafa;border:1px solid #acacac"></div><div class="t" style="left:1271px;top:827.69px;font-size:12.5px;color:#333">tisknout</div><svg class="a" style="left:1390px;top:832px" width="10" height="6" viewBox="0 0 10 6"><path d="M0.5 0.5 L5 5 L9.5 0.5" fill="none" stroke="#9a9a9a" stroke-width="1"/></svg><div class="a" style="left:760px;top:368px;width:355px;height:161px;border-radius:8px;background:#f0f0f0;box-shadow:0 12px 40px rgba(0,0,0,0.45), 0 0 0 1px rgba(120,120,120,0.35);overflow:hidden"><div class="a" style="left:0;top:0;width:355px;height:31px;background:#fff"></div></div><svg class="a" style="left:764px;top:374px" width="18" height="18" viewBox="0 0 18 18"><defs><linearGradient id="dg" x1="0" y1="0" x2="0" y2="1"><stop offset="0" stop-color="#ffb040"/><stop offset="1" stop-color="#f07a10"/></linearGradient></defs><path d="M3.2 7.5 A6.8 6.8 0 1 0 14.8 7.5" fill="none" stroke="#2a78d0" stroke-width="2.2"/><circle cx="9" cy="11" r="5" fill="url(#dg)"/><path d="M5 9.5 q4 4.5 8 0" fill="#fff" opacity="0.85"/><circle cx="9" cy="3.5" r="2.4" fill="#f39a1e"/></svg><div class="t" style="left:788px;top:375.70px;font-size:14.7px;">Výsledek/Statistika zpracování</div><svg class="a" style="left:1087px;top:377px" width="14" height="13" viewBox="0 0 14 13"><path d="M1 0.5 L13 12.5 M13 0.5 L1 12.5" stroke="#222" stroke-width="1.3"/></svg><svg class="a" style="left:769px;top:408px" width="34" height="33" viewBox="0 0 34 33"><defs><radialGradient id="ig" cx="0.35" cy="0.2" r="0.95"><stop offset="0" stop-color="#9ab8ff"/><stop offset="0.45" stop-color="#2a50c8"/><stop offset="1" stop-color="#1a36a8"/></radialGradient><clipPath id="ic"><rect x="0" y="0" width="33" height="32"/></clipPath></defs><g clip-path="url(#ic)"><circle cx="19" cy="19" r="18" fill="#e4e4e4" stroke="#7a7a7a" stroke-width="1.2"/><circle cx="19" cy="19" r="16.3" fill="url(#ig)"/><path d="M3 20 q16 -14 32 -3 l0 -8 q-8 -8 -16 -8 q-14 0 -16 19z" fill="#ffffff" opacity="0.15"/><circle cx="18.5" cy="9.5" r="2.5" fill="#fff"/><rect x="16.5" y="14.5" width="4" height="16" rx="1" fill="#d8d8d8"/></g></svg><div class="t" style="left:817px;top:412.88px;font-size:14.5px;">Počet vybraných záznamů ke zpracování:</div><div class="t" style="left:1097px;top:412.88px;font-size:14.5px;">2</div><div class="t" style="left:817px;top:436.88px;font-size:14.5px;">Počet záznamů zpracovaných:</div><div class="t" style="left:1026px;top:436.88px;font-size:14.5px;">2</div><div class="t" style="left:817px;top:460.88px;font-size:14.5px;">Počet záznamů nezpracovaných:</div><div class="t" style="left:1042px;top:460.88px;font-size:14.5px;">0</div><div class="a" style="left:908px;top:488px;width:58px;height:28px;border:1.5px solid #0a64c8;border-radius:3px;background:#eef4fb"><div class="a" style="left:2px;top:2px;width:51px;height:21px;border:1px dotted #222"></div></div><div class="t" style="left:908px;top:495.88px;font-size:14.5px;width:58px;text-align:center;">OK</div><div class="a" style="left:926px;top:511px;width:10px;height:1px;background:#111"></div></body></html>
